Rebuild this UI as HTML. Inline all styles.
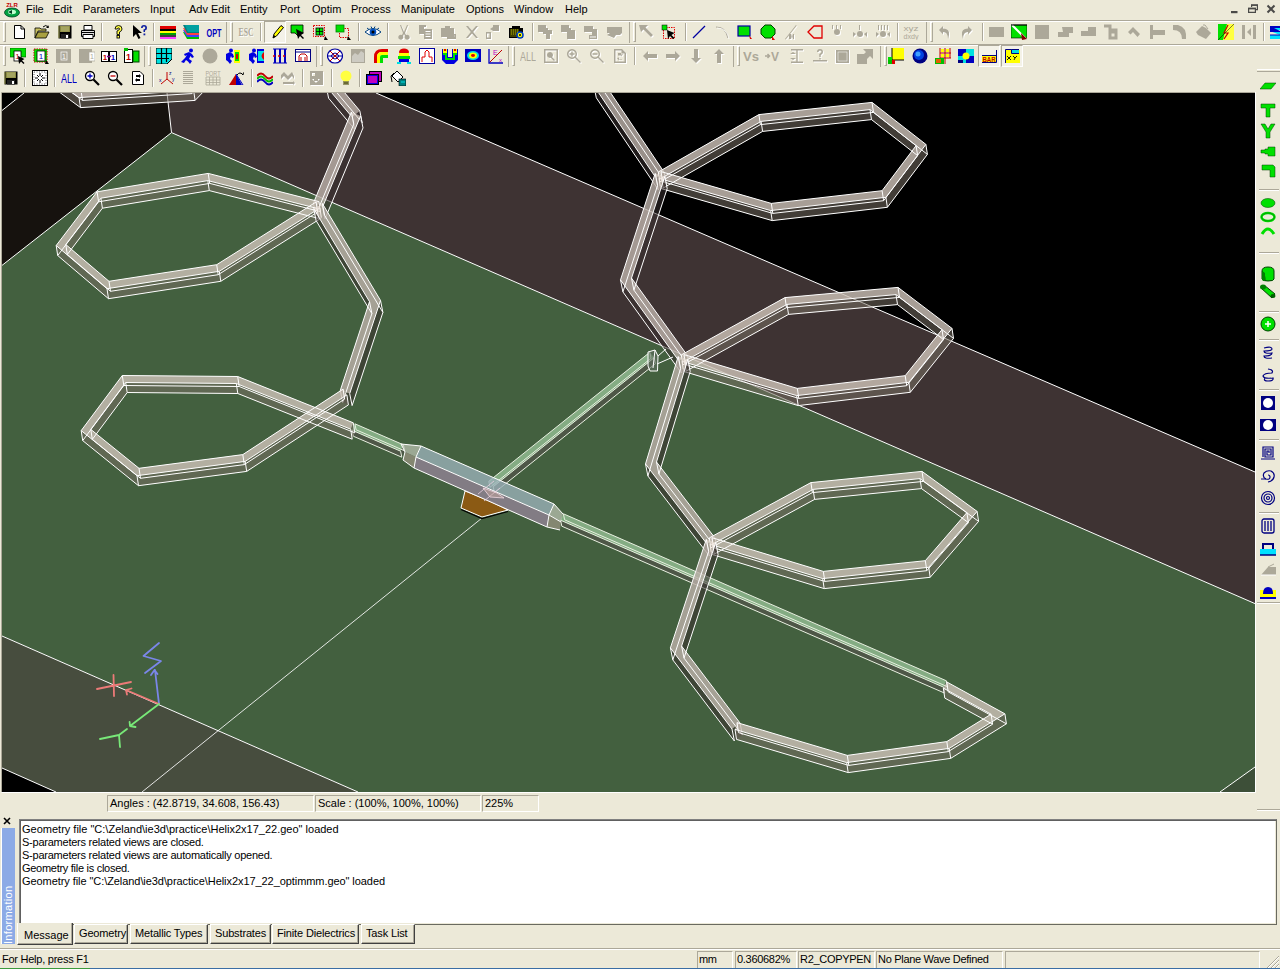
<!DOCTYPE html><html><head><meta charset="utf-8"><style>
*{margin:0;padding:0;box-sizing:border-box}
html,body{width:1280px;height:969px;overflow:hidden;background:#ece9d8;font-family:"Liberation Sans",sans-serif;font-size:11px;color:#000}
.a{position:absolute}
.menu span{position:absolute;top:3px;font-size:11px}
</style></head><body>
<div class="a menu" style="left:0;top:0;width:1280px;height:20px">
<span style="left:26px">File</span>
<span style="left:53px">Edit</span>
<span style="left:83px">Parameters</span>
<span style="left:150px">Input</span>
<span style="left:189px">Adv Edit</span>
<span style="left:240px">Entity</span>
<span style="left:280px">Port</span>
<span style="left:312px">Optim</span>
<span style="left:351px">Process</span>
<span style="left:401px">Manipulate</span>
<span style="left:466px">Options</span>
<span style="left:514px">Window</span>
<span style="left:565px">Help</span>
</div>
<div class="a" style="left:0;top:20px;width:1280px;height:1px;background:#aca899"></div>
<div class="a" style="left:0;top:21px;width:1280px;height:1px;background:#fff"></div>
<div class="a" style="left:0;top:44px;width:1280px;height:1px;background:#aca899"></div>
<div class="a" style="left:0;top:45px;width:1280px;height:1px;background:#fff"></div>
<div class="a" style="left:3px;top:22px;width:3px;height:20px;border-left:1px solid #fff;border-top:1px solid #fff;border-right:1px solid #aca899;border-bottom:1px solid #aca899"></div>
<svg class="a" style="left:11px;top:24px" width="16" height="16" viewBox="0 0 16 16"><path d="M3.5,1.5H10L13.5,5V14.5H3.5Z" fill="#fff" stroke="#000"/><path d="M10,1.5V5H13.5" fill="none" stroke="#000"/></svg>
<svg class="a" style="left:34px;top:24px" width="16" height="16" viewBox="0 0 16 16"><path d="M1,4H6L7,5H12V7H4L1,14Z" fill="#c8c060" stroke="#000" stroke-width="0.8"/><path d="M4,8H15L12,14H1Z" fill="#a8a040" stroke="#000" stroke-width="0.8"/><path d="M9,3Q12,0 14,3" fill="none" stroke="#000"/><path d="M12.5,3.5L14.5,3.5L14,1.5" fill="none" stroke="#000"/></svg>
<svg class="a" style="left:57px;top:24px" width="16" height="16" viewBox="0 0 16 16"><path d="M1.5,1.5H14.5V14.5H1.5Z" fill="#000"/><path d="M3,2H13V8H3Z" fill="#8a8a40"/><path d="M4,2.5H12V7.5H4Z" fill="#a4a460"/><path d="M4,10H12V14.5H4Z" fill="#222"/><rect x="9" y="11" width="2" height="3" fill="#fff"/><path d="M2,2V14" stroke="#a0a050"/></svg>
<svg class="a" style="left:80px;top:24px" width="16" height="16" viewBox="0 0 16 16"><path d="M4,1.5H12V6H4Z" fill="#fff" stroke="#000"/><path d="M1.5,6.5H14.5V12.5H1.5Z" fill="#e0e0e0" stroke="#000"/><path d="M3,10.5H13V14.5H3Z" fill="#fff" stroke="#000"/><path d="M2,8.5H14" stroke="#000"/></svg>
<div class="a" style="left:101px;top:23px;width:2px;height:18px;border-left:1px solid #aca899;border-right:1px solid #fff"></div>
<svg class="a" style="left:110px;top:24px" width="16" height="16" viewBox="0 0 16 16"><path d="M5,5Q5,1.5 8.5,1.5Q12,1.5 12,5Q12,7 9.5,8V10.5H7V7Q9.5,6 9.5,5Q9.5,4 8.5,4Q7.5,4 7.5,5Z" fill="#ffff40" stroke="#000" stroke-width="0.9"/><rect x="7" y="11.5" width="2.5" height="2.5" fill="#ffff40" stroke="#000" stroke-width="0.9"/></svg>
<svg class="a" style="left:132px;top:24px" width="16" height="16" viewBox="0 0 16 16"><path d="M1,1V13L4,10L6.5,15L8.5,14L6,9H10Z" fill="#000"/><path d="M9,4Q9,1 12,1Q15,1 15,4Q15,6 13,6.5V8H11.5V5.5Q13.3,5 13.3,4Q13.3,2.6 12,2.6Q10.7,2.6 10.7,4Z" fill="#1020a0"/><rect x="11.5" y="9.5" width="1.8" height="1.8" fill="#1020a0"/></svg>
<div class="a" style="left:153px;top:23px;width:2px;height:18px;border-left:1px solid #aca899;border-right:1px solid #fff"></div>
<svg class="a" style="left:160px;top:24px" width="16" height="16" viewBox="0 0 16 16"><rect x="0" y="2" width="16" height="3" fill="#e00000"/><rect x="0" y="5" width="16" height="2" fill="#000"/><rect x="0" y="7" width="16" height="2" fill="#ffff00"/><rect x="0" y="9" width="16" height="2" fill="#00a000"/><rect x="0" y="11" width="16" height="2" fill="#404040"/><rect x="0" y="13" width="16" height="2" fill="#ff40ff"/></svg>
<svg class="a" style="left:183px;top:24px" width="16" height="16" viewBox="0 0 16 16"><path d="M0,8L4,15H16V10Z" fill="#00c000"/><path d="M0,6L4,13H16V8Z" fill="#4040ff"/><path d="M0,4L4,11H16V6Z" fill="#ff4040"/><path d="M0,1L4,9H16V1Z" fill="#008080"/><path d="M2,1H16V8H5Z" fill="#00a0a0"/></svg>
<svg class="a" style="left:206px;top:24px" width="16" height="16" viewBox="0 0 16 16"><text x="8" y="12.5" font-family="Liberation Sans" font-weight="bold" font-size="11" fill="#0000c0" text-anchor="middle" textLength="15" lengthAdjust="spacingAndGlyphs">OPT</text></svg>
<div class="a" style="left:226px;top:22px;width:1px;height:21px;background:#aca899"></div>
<div class="a" style="left:230px;top:22px;width:3px;height:20px;border-left:1px solid #fff;border-top:1px solid #fff;border-right:1px solid #aca899;border-bottom:1px solid #aca899"></div>
<svg class="a" style="left:238px;top:24px" width="16" height="16" viewBox="0 0 16 16"><text x="9" y="13" font-family="Liberation Serif" font-weight="bold" font-size="12" fill="#fff" text-anchor="middle" textLength="15" lengthAdjust="spacingAndGlyphs">ESC</text><text x="8" y="12" font-family="Liberation Serif" font-weight="bold" font-size="12" fill="#aca899" text-anchor="middle" textLength="15" lengthAdjust="spacingAndGlyphs">ESC</text></svg>
<div class="a" style="left:260px;top:23px;width:2px;height:18px;border-left:1px solid #aca899;border-right:1px solid #fff"></div>
<div class="a" style="left:264px;top:21px;width:22px;height:22px;background:#f4f2e8;border-left:1px solid #aca899;border-top:1px solid #aca899;border-right:1px solid #fff;border-bottom:1px solid #fff"></div>
<svg class="a" style="left:269px;top:24px" width="16" height="16" viewBox="0 0 16 16"><path d="M4,14L5,10L12,1.5L14.5,3.5L7.5,12Z" fill="#ffff00" stroke="#000"/><path d="M4,14L5,11L6.5,12.5Z" fill="#000"/></svg>
<svg class="a" style="left:290px;top:24px" width="16" height="16" viewBox="0 0 16 16"><path d="M1,1H13V9H8V12L5,9H1Z" fill="#00e000" stroke="#000" stroke-width="0.8"/><path d="M6,5L8,15L10,12L13,15L14,14L11,11L14,9Z" fill="#000"/></svg>
<svg class="a" style="left:312px;top:24px" width="16" height="16" viewBox="0 0 16 16"><rect x="1.5" y="1.5" width="11" height="11" fill="none" stroke="#e00000" stroke-dasharray="1.5,1"/><rect x="4" y="4" width="7" height="7" fill="#00e000" stroke="#000" stroke-width="0.8"/><path d="M4,7.5H11M7.5,4V11" stroke="#000" stroke-width="0.8"/><path d="M13,12L16,16H12Z" fill="#000"/></svg>
<svg class="a" style="left:335px;top:24px" width="16" height="16" viewBox="0 0 16 16"><rect x="4.5" y="4.5" width="9" height="9" fill="none" stroke="#e00000" stroke-dasharray="1.5,1"/><rect x="1" y="1" width="8" height="7" fill="#00e000" stroke="#008000" stroke-width="0.8"/><path d="M13,12L16,16H12Z" fill="#000"/></svg>
<div class="a" style="left:358px;top:23px;width:2px;height:18px;border-left:1px solid #aca899;border-right:1px solid #fff"></div>
<svg class="a" style="left:365px;top:24px" width="16" height="16" viewBox="0 0 16 16"><path d="M0,8Q8,1 16,8Q8,15 0,8Z" fill="#fff" stroke="#004080"/><circle cx="8" cy="8" r="3.3" fill="#0050c0"/><circle cx="8" cy="8" r="1.5" fill="#000"/><path d="M2,4L4,5.5M6,2.5L7,4.5M10,2.5L9,4.5M14,4L12,5.5" stroke="#004080"/></svg>
<div class="a" style="left:387px;top:23px;width:2px;height:18px;border-left:1px solid #aca899;border-right:1px solid #fff"></div>
<svg class="a" style="left:396px;top:24px" width="16" height="16" viewBox="0 0 16 16"><g transform="translate(1,1)" fill="#ffffff"><path d="M5,1L8,8L11,1L12,1L9,9L10,11A2.5,2.5 0 1 1 9,12L8,10L7,12A2.5,2.5 0 1 1 6,11L7,9L4,1Z"/></g><g fill="#aca899"><path d="M5,1L8,8L11,1L12,1L9,9L10,11A2.5,2.5 0 1 1 9,12L8,10L7,12A2.5,2.5 0 1 1 6,11L7,9L4,1Z"/></g></svg>
<svg class="a" style="left:418px;top:24px" width="16" height="16" viewBox="0 0 16 16"><g transform="translate(1,1)" fill="#ffffff"><path d="M1,1H8V3H6V10H1ZM6,5H14V15H6ZM7.5,7V8H12.5V7ZM7.5,9.5V10.5H12.5V9.5ZM7.5,12V13H12.5V12Z"/></g><g fill="#aca899"><path d="M1,1H8V3H6V10H1ZM6,5H14V15H6ZM7.5,7V8H12.5V7ZM7.5,9.5V10.5H12.5V9.5ZM7.5,12V13H12.5V12Z"/></g></svg>
<svg class="a" style="left:440px;top:24px" width="16" height="16" viewBox="0 0 16 16"><g transform="translate(1,1)" fill="#ffffff"><path d="M1,4H5V2H10V4H14V10H16V15H7V10H14V13H1ZM8,11.5V12.5H14.5V11.5Z"/></g><g fill="#aca899"><path d="M1,4H5V2H10V4H14V10H16V15H7V10H14V13H1ZM8,11.5V12.5H14.5V11.5Z"/></g></svg>
<svg class="a" style="left:464px;top:24px" width="16" height="16" viewBox="0 0 16 16"><g transform="translate(1,1)" fill="#ffffff"><path d="M2,2L4,2L8,6.5L12,2L14,2L9.2,8L14,14L12,14L8,9.5L4,14L2,14L6.8,8Z"/></g><g fill="#aca899"><path d="M2,2L4,2L8,6.5L12,2L14,2L9.2,8L14,14L12,14L8,9.5L4,14L2,14L6.8,8Z"/></g></svg>
<svg class="a" style="left:485px;top:24px" width="16" height="16" viewBox="0 0 16 16"><g transform="translate(1,1)" fill="#ffffff"><path d="M8,1H14V7H8ZM1,8H6V15H1ZM2,9.5V13.5H4.5V9.5ZM5,5L8,3V7Z"/></g><g fill="#aca899"><path d="M8,1H14V7H8ZM1,8H6V15H1ZM2,9.5V13.5H4.5V9.5ZM5,5L8,3V7Z"/></g></svg>
<svg class="a" style="left:508px;top:24px" width="16" height="16" viewBox="0 0 16 16"><path d="M1,4H15V14H1Z" fill="#000"/><path d="M4,2H12V4H4Z" fill="#000"/><rect x="2" y="5" width="9" height="8" fill="#808000" fill-opacity="0.5"/><circle cx="12" cy="11" r="3.8" fill="#0040c0"/><circle cx="12" cy="11" r="2.2" fill="#ffff00"/><circle cx="12" cy="11" r="1" fill="#000"/><path d="M3,6H10M3,8H10M3,10H8" stroke="#ffff00" stroke-width="0.6" stroke-dasharray="1,1"/></svg>
<div class="a" style="left:532px;top:23px;width:2px;height:18px;border-left:1px solid #aca899;border-right:1px solid #fff"></div>
<svg class="a" style="left:537px;top:24px" width="16" height="16" viewBox="0 0 16 16"><g transform="translate(1,1)" fill="#ffffff"><path d="M1,1H9V4H11V6H15V10H6V8H1ZM9,10H13V15H9Z"/></g><g fill="#aca899"><path d="M1,1H9V4H11V6H15V10H6V8H1ZM9,10H13V15H9Z"/></g></svg>
<svg class="a" style="left:560px;top:24px" width="16" height="16" viewBox="0 0 16 16"><g transform="translate(1,1)" fill="#ffffff"><path d="M1,1H9V4H11V6H15V10H7V8H1ZM7,10H15V15H7Z"/></g><g fill="#aca899"><path d="M1,1H9V4H11V6H15V10H7V8H1ZM7,10H15V15H7Z"/></g></svg>
<svg class="a" style="left:583px;top:24px" width="16" height="16" viewBox="0 0 16 16"><g transform="translate(1,1)" fill="#ffffff"><path d="M1,2H10V5H14V11H9V8H1ZM6,11H14V15H6ZM7,12.5V13.5H13V12.5Z"/></g><g fill="#aca899"><path d="M1,2H10V5H14V11H9V8H1ZM6,11H14V15H6ZM7,12.5V13.5H13V12.5Z"/></g></svg>
<svg class="a" style="left:606px;top:24px" width="16" height="16" viewBox="0 0 16 16"><g transform="translate(1,1)" fill="#ffffff"><path d="M1,3H16V9L14,11H10L8,14L1,11L4,9H1Z"/></g><g fill="#aca899"><path d="M1,3H16V9L14,11H10L8,14L1,11L4,9H1Z"/></g></svg>
<div class="a" style="left:629px;top:22px;width:1px;height:21px;background:#aca899"></div>
<div class="a" style="left:633px;top:22px;width:3px;height:20px;border-left:1px solid #fff;border-top:1px solid #fff;border-right:1px solid #aca899;border-bottom:1px solid #aca899"></div>
<svg class="a" style="left:638px;top:24px" width="16" height="16" viewBox="0 0 16 16"><g transform="translate(1,1)" fill="#ffffff"><path d="M1,1H10L7.5,3.5L15,11L13,13L5.5,5.5L3,8Z"/></g><g fill="#aca899"><path d="M1,1H10L7.5,3.5L15,11L13,13L5.5,5.5L3,8Z"/></g></svg>
<svg class="a" style="left:661px;top:24px" width="16" height="16" viewBox="0 0 16 16"><rect x="2.5" y="3.5" width="11" height="11" fill="none" stroke="#e00000" stroke-dasharray="1.5,1"/><rect x="1" y="1" width="5" height="5" fill="#00e000" stroke="#000" stroke-width="0.5"/><path d="M6,6L7,15L9,12L12,15L13.5,14L10.5,11L13.5,9Z" fill="#000"/></svg>
<div class="a" style="left:685px;top:23px;width:2px;height:18px;border-left:1px solid #aca899;border-right:1px solid #fff"></div>
<svg class="a" style="left:691px;top:24px" width="16" height="16" viewBox="0 0 16 16"><path d="M2,14L14,2" stroke="#0000a0" stroke-width="1.2"/></svg>
<svg class="a" style="left:714px;top:24px" width="16" height="16" viewBox="0 0 16 16"><path d="M2,3Q12,3 14,14" fill="none" stroke="#aca899" stroke-width="1.2"/><path d="M3,4Q13,4 15,15" fill="none" stroke="#fff" stroke-width="0.8"/></svg>
<svg class="a" style="left:737px;top:24px" width="16" height="16" viewBox="0 0 16 16"><rect x="1" y="2" width="12" height="10" fill="#00e000" stroke="#0000a0" stroke-width="1.2"/><path d="M12,11L15,15H13Z" fill="#e00000"/></svg>
<svg class="a" style="left:760px;top:24px" width="16" height="16" viewBox="0 0 16 16"><path d="M5,1H11L15,5V10L11,14H5L1,10V5Z" fill="#00e000" stroke="#004000"/><path d="M12,12L15,16H12Z" fill="#e00000"/></svg>
<svg class="a" style="left:784px;top:24px" width="16" height="16" viewBox="0 0 16 16"><g transform="translate(1,1)" fill="#ffffff"><path d="M1,15L12,1L12.6,1.6L1.6,15.6ZM5,10H6V15H5ZM7,10L8,13L9,10H10V15H9V12L8,15L7,12V15H6V10Z"/></g><g fill="#aca899"><path d="M1,15L12,1L12.6,1.6L1.6,15.6ZM5,10H6V15H5ZM7,10L8,13L9,10H10V15H9V12L8,15L7,12V15H6V10Z"/></g></svg>
<svg class="a" style="left:807px;top:24px" width="16" height="16" viewBox="0 0 16 16"><path d="M1,8L7,2H15V14H7Z" fill="none" stroke="#e00000" stroke-width="1.3"/></svg>
<svg class="a" style="left:829px;top:24px" width="16" height="16" viewBox="0 0 16 16"><g transform="translate(1,1)" fill="#ffffff"><path d="M3,1H4V5H3ZM7,1H8V5H7ZM11,1H12V5H11ZM5,8A3,3 0 1 1 11,8A3,3 0 1 1 5,8Z"/></g><g fill="#aca899"><path d="M3,1H4V5H3ZM7,1H8V5H7ZM11,1H12V5H11ZM5,8A3,3 0 1 1 11,8A3,3 0 1 1 5,8Z"/></g></svg>
<svg class="a" style="left:852px;top:24px" width="16" height="16" viewBox="0 0 16 16"><g transform="translate(1,1)" fill="#ffffff"><path d="M7,1H8V6H7ZM1,8L4,10L1,13ZM15,8L12,10L15,13ZM5,10A3,3 0 1 1 11,10A3,3 0 1 1 5,10Z"/></g><g fill="#aca899"><path d="M7,1H8V6H7ZM1,8L4,10L1,13ZM15,8L12,10L15,13ZM5,10A3,3 0 1 1 11,10A3,3 0 1 1 5,10Z"/></g></svg>
<svg class="a" style="left:875px;top:24px" width="16" height="16" viewBox="0 0 16 16"><g transform="translate(1,1)" fill="#ffffff"><path d="M3,1H4V6H3ZM6,1H7V6H6ZM9,1H10V6H9ZM12,1H13V6H12ZM1,8L4,10L1,13ZM15,8L12,10L15,13ZM5,10A3,3 0 1 1 11,10A3,3 0 1 1 5,10Z"/></g><g fill="#aca899"><path d="M3,1H4V6H3ZM6,1H7V6H6ZM9,1H10V6H9ZM12,1H13V6H12ZM1,8L4,10L1,13ZM15,8L12,10L15,13ZM5,10A3,3 0 1 1 11,10A3,3 0 1 1 5,10Z"/></g></svg>
<div class="a" style="left:897px;top:23px;width:2px;height:18px;border-left:1px solid #aca899;border-right:1px solid #fff"></div>
<svg class="a" style="left:903px;top:24px" width="16" height="16" viewBox="0 0 16 16"><text x="8" y="7" font-family="Liberation Sans" font-size="7.5" fill="#aca899" text-anchor="middle" textLength="15" lengthAdjust="spacingAndGlyphs">xyz</text><text x="8" y="15" font-family="Liberation Sans" font-size="7.5" fill="#aca899" text-anchor="middle" textLength="15" lengthAdjust="spacingAndGlyphs">dxdy</text></svg>
<div class="a" style="left:926px;top:22px;width:1px;height:21px;background:#aca899"></div>
<div class="a" style="left:930px;top:22px;width:3px;height:20px;border-left:1px solid #fff;border-top:1px solid #fff;border-right:1px solid #aca899;border-bottom:1px solid #aca899"></div>
<svg class="a" style="left:936px;top:24px" width="16" height="16" viewBox="0 0 16 16"><g transform="translate(1,1)" fill="#ffffff"><path d="M3,6L7,2V4.5Q14,4.5 13,11L12,15Q12,8 7,8V10.5Z"/></g><g fill="#aca899"><path d="M3,6L7,2V4.5Q14,4.5 13,11L12,15Q12,8 7,8V10.5Z"/></g></svg>
<svg class="a" style="left:959px;top:24px" width="16" height="16" viewBox="0 0 16 16"><g transform="translate(1,1)" fill="#ffffff"><path d="M13,6L9,2V4.5Q2,4.5 3,11L4,15Q4,8 9,8V10.5Z"/></g><g fill="#aca899"><path d="M13,6L9,2V4.5Q2,4.5 3,11L4,15Q4,8 9,8V10.5Z"/></g></svg>
<div class="a" style="left:982px;top:23px;width:2px;height:18px;border-left:1px solid #aca899;border-right:1px solid #fff"></div>
<svg class="a" style="left:988px;top:24px" width="16" height="16" viewBox="0 0 16 16"><rect x="1" y="3" width="15" height="10" fill="#aca899"/></svg>
<svg class="a" style="left:1011px;top:24px" width="16" height="16" viewBox="0 0 16 16"><rect x="0" y="1" width="16" height="13" fill="#00e000" stroke="#000" stroke-width="0.6"/><path d="M1,1L15,15" stroke="#fff" stroke-width="2"/><path d="M10,9L16,15L11,16Z" fill="#800000"/><path d="M0,1H16" stroke="#000"/></svg>
<svg class="a" style="left:1034px;top:24px" width="16" height="16" viewBox="0 0 16 16"><rect x="1" y="1" width="14" height="14" fill="#aca899"/></svg>
<svg class="a" style="left:1057px;top:24px" width="16" height="16" viewBox="0 0 16 16"><path d="M5,3H16V9H12V13H1V8H6Z" fill="#aca899"/></svg>
<svg class="a" style="left:1080px;top:24px" width="16" height="16" viewBox="0 0 16 16"><path d="M8,3H16V12H1V7H8Z" fill="#aca899"/></svg>
<svg class="a" style="left:1103px;top:24px" width="16" height="16" viewBox="0 0 16 16"><path d="M1,2H7V8H10V6H13V14H7V8" fill="none" stroke="#aca899" stroke-width="3"/></svg>
<svg class="a" style="left:1126px;top:24px" width="16" height="16" viewBox="0 0 16 16"><path d="M2,8L7,3L14,10L11.5,13L7,8L4.5,10.5Z" fill="#aca899"/></svg>
<svg class="a" style="left:1149px;top:24px" width="16" height="16" viewBox="0 0 16 16"><path d="M1,1H4V6H16V11H4V15H1Z" fill="#aca899"/></svg>
<svg class="a" style="left:1172px;top:24px" width="16" height="16" viewBox="0 0 16 16"><path d="M1,1H6Q15,3 14,15H10Q10,6 1,6Z" fill="#aca899"/></svg>
<svg class="a" style="left:1195px;top:24px" width="16" height="16" viewBox="0 0 16 16"><path d="M1,8L7,2L11,4L16,9L11,15L3,11Z" fill="#aca899"/><path d="M8,1L10,1L13,5" stroke="#aca899" fill="none"/></svg>
<svg class="a" style="left:1218px;top:24px" width="16" height="16" viewBox="0 0 16 16"><path d="M0,0H16V16H0Z" fill="#00e000"/><path d="M9,0H16V16H5Z" fill="#ffff40"/><path d="M10,1L6,9L10,9L6,15" fill="none" stroke="#c00000" stroke-width="1.2"/><path d="M0,16L16,0" stroke="#000" stroke-width="0.5"/></svg>
<svg class="a" style="left:1241px;top:24px" width="16" height="16" viewBox="0 0 16 16"><path d="M1,1H4V15H1ZM12,1H15V15H12ZM6,8L10,4V12Z" fill="#aca899"/></svg>
<div class="a" style="left:1263px;top:23px;width:2px;height:18px;border-left:1px solid #aca899;border-right:1px solid #fff"></div>
<svg class="a" style="left:1270px;top:24px" width="16" height="16" viewBox="0 0 16 16"><path d="M0,2H16V6H6L16,10V15H0V11H10L0,7Z" fill="#00e0ff"/><path d="M0,2H16V4H4L12,8L0,8Z" fill="#0000c0"/><path d="M0,11H16" stroke="#0000c0"/></svg>
<div class="a" style="left:3px;top:46px;width:3px;height:20px;border-left:1px solid #fff;border-top:1px solid #fff;border-right:1px solid #aca899;border-bottom:1px solid #aca899"></div>
<svg class="a" style="left:10px;top:48px" width="16" height="16" viewBox="0 0 16 16"><rect x="0" y="0" width="16" height="9" fill="#00e000" stroke="#004000" stroke-width="0.6"/><rect x="4" y="3" width="7" height="10" fill="#fff" stroke="#000" stroke-width="0.8"/><text x="7.5" y="11" font-size="8" font-family="Liberation Sans" fill="#c00000" text-anchor="middle">1</text><path d="M8,8L9,16L11,13.5L13.5,16L14.5,15L12,12.5L14.5,11Z" fill="#000"/></svg>
<svg class="a" style="left:33px;top:48px" width="16" height="16" viewBox="0 0 16 16"><rect x="1" y="1" width="13" height="13" fill="#00e000" stroke="#c00000" stroke-dasharray="1.5,1"/><rect x="4" y="3" width="8" height="10" fill="#fff" stroke="#000" stroke-width="0.8"/><text x="8" y="11" font-size="8" font-family="Liberation Sans" fill="#0000c0" text-anchor="middle">1</text><path d="M13,12L16,16H12Z" fill="#000"/></svg>
<svg class="a" style="left:56px;top:48px" width="16" height="16" viewBox="0 0 16 16"><rect x="0" y="1" width="15" height="14" fill="#aca899"/><rect x="5" y="4" width="6" height="8" fill="none" stroke="#fff" stroke-width="0.7"/><text x="8" y="11" font-size="7" font-family="Liberation Sans" fill="#fff" text-anchor="middle">1</text></svg>
<svg class="a" style="left:79px;top:48px" width="16" height="16" viewBox="0 0 16 16"><rect x="0" y="1" width="13" height="14" fill="#aca899"/><rect x="10" y="4" width="6" height="9" fill="#fff" stroke="#aca899" stroke-width="0.7"/><text x="13" y="11" font-size="7" font-family="Liberation Sans" fill="#aca899" text-anchor="middle">1</text></svg>
<svg class="a" style="left:101px;top:48px" width="16" height="16" viewBox="0 0 16 16"><rect x="0.5" y="3.5" width="7" height="10" fill="#fff" stroke="#000"/><rect x="8.5" y="3.5" width="7" height="10" fill="#fff" stroke="#000"/><text x="4" y="11.5" font-size="8" font-weight="bold" font-family="Liberation Sans" fill="#c00000" text-anchor="middle">1</text><text x="12" y="11.5" font-size="8" font-weight="bold" font-family="Liberation Sans" fill="#0000c0" text-anchor="middle">1</text><path d="M6,8.5H10" stroke="#800080" stroke-width="1.5"/></svg>
<svg class="a" style="left:124px;top:48px" width="16" height="16" viewBox="0 0 16 16"><rect x="0.5" y="1.5" width="8" height="13" fill="#fff" stroke="#000"/><rect x="9" y="3" width="6" height="11" fill="#00e000" stroke="#004000"/><text x="4.5" y="11.5" font-size="9" font-weight="bold" font-family="Liberation Sans" fill="#c00000" text-anchor="middle">1</text><rect x="0" y="0" width="4" height="3" fill="#00c000"/></svg>
<div class="a" style="left:144px;top:46px;width:1px;height:21px;background:#aca899"></div>
<div class="a" style="left:148px;top:46px;width:3px;height:20px;border-left:1px solid #fff;border-top:1px solid #fff;border-right:1px solid #aca899;border-bottom:1px solid #aca899"></div>
<svg class="a" style="left:156px;top:48px" width="16" height="16" viewBox="0 0 16 16"><path d="M0,0H16V11L11,16H0Z" fill="#00e0e0" stroke="#000" stroke-width="1"/><path d="M0,5.5H16M0,10.5H13M5.5,0V16M10.5,0V14" stroke="#000" stroke-width="1.2"/></svg>
<svg class="a" style="left:180px;top:48px" width="16" height="16" viewBox="0 0 16 16"><circle cx="11" cy="2.5" r="2" fill="#0000e0"/><path d="M4,6L9,4L12,6L14,9L12,10L10.5,8L9,11L12,13L10,16L8,13.5L6,12L4,15L1,14L5,10L7,7L5,8Z" fill="#0000e0"/></svg>
<svg class="a" style="left:202px;top:48px" width="16" height="16" viewBox="0 0 16 16"><circle cx="8" cy="8" r="7.5" fill="#aca899"/></svg>
<svg class="a" style="left:225px;top:48px" width="16" height="16" viewBox="0 0 16 16"><circle cx="6" cy="2.5" r="2" fill="#0000e0"/><path d="M1,6L5,4L8,6L9,9L7,10L6,8L5,11L7,13L5,16L3,13.5L1,12Z" fill="#0000e0"/><rect x="9" y="2" width="6" height="13" fill="#ffff00"/><rect x="10" y="4" width="4" height="9" fill="#00e000"/><rect x="11" y="6" width="2" height="5" fill="#e00000"/></svg>
<svg class="a" style="left:248px;top:48px" width="16" height="16" viewBox="0 0 16 16"><circle cx="6" cy="2.5" r="2" fill="#0000e0"/><path d="M1,6L5,4L8,6L9,9L7,10L6,8L5,11L7,13L5,16L3,13.5L1,12Z" fill="#0000e0"/><rect x="9" y="1" width="7" height="14" fill="#0000e0"/><rect x="10" y="3" width="6" height="10" fill="#00e0e0"/><path d="M16,4Q11,8 16,12Z" fill="#e00000"/></svg>
<svg class="a" style="left:272px;top:48px" width="16" height="16" viewBox="0 0 16 16"><path d="M3,1V15M8,1V15M13,1V15" stroke="#0000c0" stroke-width="2"/><path d="M1,1H15M1,15H15" stroke="#0000c0" stroke-width="1"/><path d="M1,8H15" stroke="#e00000" stroke-width="1.5" stroke-dasharray="2,3"/></svg>
<svg class="a" style="left:295px;top:48px" width="16" height="16" viewBox="0 0 16 16"><rect x="0.5" y="1.5" width="15" height="12" fill="#fff" stroke="#000080"/><path d="M0.5,4H15.5" stroke="#000080"/><path d="M4,13V8L6,6H10L12,8V13M6,9V13M10,9V13" fill="none" stroke="#c00000"/></svg>
<div class="a" style="left:316px;top:46px;width:1px;height:21px;background:#aca899"></div>
<div class="a" style="left:320px;top:46px;width:3px;height:20px;border-left:1px solid #fff;border-top:1px solid #fff;border-right:1px solid #aca899;border-bottom:1px solid #aca899"></div>
<svg class="a" style="left:327px;top:48px" width="16" height="16" viewBox="0 0 16 16"><ellipse cx="8" cy="8" rx="7.5" ry="7" fill="#fff" stroke="#0000a0" stroke-width="1.2"/><path d="M1,8H15" stroke="#0000a0"/><path d="M8,8L3,3M8,8L13,3M8,8L3,13M8,8L13,13" stroke="#c00000"/><path d="M4,8Q8,2 12,8Q8,14 4,8Z" fill="none" stroke="#0000a0"/></svg>
<svg class="a" style="left:350px;top:48px" width="16" height="16" viewBox="0 0 16 16"><path d="M1,1H15V15H1Z" fill="#aca899"/><path d="M2,8L5,5L8,7L11,3L14,5V14H2Z" fill="#fff" fill-opacity="0.4"/></svg>
<svg class="a" style="left:373px;top:48px" width="16" height="16" viewBox="0 0 16 16"><path d="M1,15V9Q1,1 9,1H15V4H9Q4,4 4,9V15Z" fill="#e00000"/><path d="M4,15V9Q4,4 9,4H15V7H9Q7,7 7,9V15Z" fill="#ffff00"/><path d="M7,15V9Q7,7 9,7H15V10H10V15Z" fill="#00e000"/></svg>
<svg class="a" style="left:396px;top:48px" width="16" height="16" viewBox="0 0 16 16"><ellipse cx="8" cy="4" rx="5" ry="3.5" fill="#e00000"/><path d="M3,5H13V8H3Z" fill="#ffff00"/><path d="M2,8H14V11H2Z" fill="#00e000"/><path d="M3,11H13V14H3Z" fill="#0000e0"/><path d="M1,14H5V16H1ZM11,14H15V16H11Z" fill="#00e0e0"/></svg>
<svg class="a" style="left:419px;top:48px" width="16" height="16" viewBox="0 0 16 16"><rect x="0.5" y="0.5" width="15" height="15" fill="#fff" stroke="#0000a0"/><path d="M3,14V9L6,9V4L8,2L10,4V9H13V14" fill="none" stroke="#e00000"/></svg>
<svg class="a" style="left:442px;top:48px" width="16" height="16" viewBox="0 0 16 16"><path d="M0,1H6V9H10V1H16V12L12,16H4L0,12Z" fill="#0000e0"/><path d="M1,1H5V10H11V1H15V7H13V12H3V7H1Z" fill="#00e000"/><path d="M1,1H5V5H1ZM11,1H15V5H11Z" fill="#ffff00"/><path d="M2,1H4V3H2ZM12,1H14V3H12Z" fill="#e00000"/></svg>
<svg class="a" style="left:465px;top:48px" width="16" height="16" viewBox="0 0 16 16"><rect x="0" y="1" width="16" height="13" fill="#0000c0"/><ellipse cx="8" cy="7.5" rx="6" ry="4.5" fill="#00e0e0"/><ellipse cx="8" cy="7.5" rx="4" ry="3" fill="#ffff00"/><ellipse cx="8" cy="7.5" rx="2" ry="1.4" fill="#e00000"/></svg>
<svg class="a" style="left:488px;top:48px" width="16" height="16" viewBox="0 0 16 16"><path d="M1,1V15H15" fill="none" stroke="#0000c0" stroke-width="1.3"/><path d="M2,14L14,2" stroke="#c00000"/><text x="5" y="7" font-size="7" font-family="Liberation Sans" fill="#c000c0">E</text><text x="11" y="14" font-size="6" font-family="Liberation Sans" fill="#c000c0">x</text></svg>
<div class="a" style="left:508px;top:46px;width:1px;height:21px;background:#aca899"></div>
<div class="a" style="left:512px;top:46px;width:3px;height:20px;border-left:1px solid #fff;border-top:1px solid #fff;border-right:1px solid #aca899;border-bottom:1px solid #aca899"></div>
<svg class="a" style="left:520px;top:48px" width="16" height="16" viewBox="0 0 16 16"><text x="8" y="13" font-family="Liberation Sans" font-size="12" fill="#aca899" text-anchor="middle" textLength="16" lengthAdjust="spacingAndGlyphs">ALL</text></svg>
<svg class="a" style="left:543px;top:48px" width="16" height="16" viewBox="0 0 16 16"><g transform="translate(1,1)" fill="#ffffff"><path d="M1,1H15V15H1ZM2.5,2.5V13.5H13.5V2.5ZM7,4A3,3 0 1 0 7.01,4ZM9,9L12,12L11,13L8,10Z"/></g><g fill="#aca899"><path d="M1,1H15V15H1ZM2.5,2.5V13.5H13.5V2.5ZM7,4A3,3 0 1 0 7.01,4ZM9,9L12,12L11,13L8,10Z"/></g></svg>
<svg class="a" style="left:566px;top:48px" width="16" height="16" viewBox="0 0 16 16"><g transform="translate(1,1)" fill="#ffffff"><path d="M6,1A5,5 0 1 1 5.99,1ZM6,2.5A3.5,3.5 0 1 0 6.01,2.5ZM5.3,3.5H6.7V5.3H8.5V6.7H6.7V8.5H5.3V6.7H3.5V5.3H5.3ZM9,10L10,9L15,14L14,15Z"/></g><g fill="#aca899"><path d="M6,1A5,5 0 1 1 5.99,1ZM6,2.5A3.5,3.5 0 1 0 6.01,2.5ZM5.3,3.5H6.7V5.3H8.5V6.7H6.7V8.5H5.3V6.7H3.5V5.3H5.3ZM9,10L10,9L15,14L14,15Z"/></g></svg>
<svg class="a" style="left:589px;top:48px" width="16" height="16" viewBox="0 0 16 16"><g transform="translate(1,1)" fill="#ffffff"><path d="M6,1A5,5 0 1 1 5.99,1ZM6,2.5A3.5,3.5 0 1 0 6.01,2.5ZM3.5,5.3H8.5V6.7H3.5ZM9,10L10,9L15,14L14,15Z"/></g><g fill="#aca899"><path d="M6,1A5,5 0 1 1 5.99,1ZM6,2.5A3.5,3.5 0 1 0 6.01,2.5ZM3.5,5.3H8.5V6.7H3.5ZM9,10L10,9L15,14L14,15Z"/></g></svg>
<svg class="a" style="left:612px;top:48px" width="16" height="16" viewBox="0 0 16 16"><g transform="translate(1,1)" fill="#ffffff"><path d="M2,1H10L14,5V15H2ZM3.5,2.5V13.5H12.5V5.5H9.5V2.5ZM6,5H9V6.5L11,6L9,8.5V7.5H6ZM10,11H7V9.5L5,10L7,12.5V11.5H10Z"/></g><g fill="#aca899"><path d="M2,1H10L14,5V15H2ZM3.5,2.5V13.5H12.5V5.5H9.5V2.5ZM6,5H9V6.5L11,6L9,8.5V7.5H6ZM10,11H7V9.5L5,10L7,12.5V11.5H10Z"/></g></svg>
<div class="a" style="left:634px;top:47px;width:2px;height:18px;border-left:1px solid #aca899;border-right:1px solid #fff"></div>
<svg class="a" style="left:642px;top:48px" width="16" height="16" viewBox="0 0 16 16"><g transform="translate(1,1)" fill="#ffffff"><path d="M1,8L6,3V6H15V10H6V13Z"/></g><g fill="#aca899"><path d="M1,8L6,3V6H15V10H6V13Z"/></g></svg>
<svg class="a" style="left:665px;top:48px" width="16" height="16" viewBox="0 0 16 16"><g transform="translate(1,1)" fill="#ffffff"><path d="M15,8L10,3V6H1V10H10V13Z"/></g><g fill="#aca899"><path d="M15,8L10,3V6H1V10H10V13Z"/></g></svg>
<svg class="a" style="left:688px;top:48px" width="16" height="16" viewBox="0 0 16 16"><g transform="translate(1,1)" fill="#ffffff"><path d="M8,15L3,10H6V1H10V10H13Z"/></g><g fill="#aca899"><path d="M8,15L3,10H6V1H10V10H13Z"/></g></svg>
<svg class="a" style="left:711px;top:48px" width="16" height="16" viewBox="0 0 16 16"><g transform="translate(1,1)" fill="#ffffff"><path d="M8,1L3,6H6V15H10V6H13Z"/></g><g fill="#aca899"><path d="M8,1L3,6H6V15H10V6H13Z"/></g></svg>
<div class="a" style="left:733px;top:46px;width:1px;height:21px;background:#aca899"></div>
<div class="a" style="left:737px;top:46px;width:3px;height:20px;border-left:1px solid #fff;border-top:1px solid #fff;border-right:1px solid #aca899;border-bottom:1px solid #aca899"></div>
<svg class="a" style="left:743px;top:48px" width="16" height="16" viewBox="0 0 16 16"><text x="8" y="13" font-family="Liberation Sans" font-weight="bold" font-size="12" fill="#aca899" text-anchor="middle" textLength="16" lengthAdjust="spacingAndGlyphs">Vs</text></svg>
<svg class="a" style="left:765px;top:48px" width="16" height="16" viewBox="0 0 16 16"><text x="10" y="13" font-family="Liberation Sans" font-weight="bold" font-size="12" fill="#aca899" text-anchor="middle">V</text><path d="M0,8H4M2.5,6L4.5,8L2.5,10" stroke="#aca899" stroke-width="1.5" fill="none"/></svg>
<svg class="a" style="left:789px;top:48px" width="16" height="16" viewBox="0 0 16 16"><g transform="translate(1,1)" fill="#ffffff"><path d="M2,1H14V2.5H8.7V13.5H14V15H2V13.5H7.3V2.5H2ZM4,4L7,6H1ZM4,12L1,10H7Z"/></g><g fill="#aca899"><path d="M2,1H14V2.5H8.7V13.5H14V15H2V13.5H7.3V2.5H2ZM4,4L7,6H1ZM4,12L1,10H7Z"/></g></svg>
<svg class="a" style="left:812px;top:48px" width="16" height="16" viewBox="0 0 16 16"><g transform="translate(1,1)" fill="#ffffff"><path d="M5,4Q5,1 8,1Q11,1 11,4Q11,6 8.7,7V9H7.3V6Q9.5,5 9.5,4Q9.5,2.5 8,2.5Q6.5,2.5 6.5,4ZM1,12H15V13.5H1ZM7.3,10H8.7V11.4H7.3Z"/></g><g fill="#aca899"><path d="M5,4Q5,1 8,1Q11,1 11,4Q11,6 8.7,7V9H7.3V6Q9.5,5 9.5,4Q9.5,2.5 8,2.5Q6.5,2.5 6.5,4ZM1,12H15V13.5H1ZM7.3,10H8.7V11.4H7.3Z"/></g></svg>
<svg class="a" style="left:835px;top:48px" width="16" height="16" viewBox="0 0 16 16"><rect x="0.5" y="2.5" width="14" height="13" fill="none" stroke="#fff"/><rect x="1" y="2" width="13" height="13" fill="#aca899"/><rect x="3" y="4" width="9" height="9" fill="#aca899" stroke="#fff" stroke-width="0.5"/></svg>
<svg class="a" style="left:857px;top:48px" width="16" height="16" viewBox="0 0 16 16"><path d="M0,6H10V16H0Z" fill="#aca899"/><path d="M6,1H16V11L13,8L9,12L5,8L9,4Z" fill="#aca899"/></svg>
<div class="a" style="left:880px;top:46px;width:1px;height:21px;background:#aca899"></div>
<div class="a" style="left:884px;top:46px;width:3px;height:20px;border-left:1px solid #fff;border-top:1px solid #fff;border-right:1px solid #aca899;border-bottom:1px solid #aca899"></div>
<svg class="a" style="left:888px;top:48px" width="16" height="16" viewBox="0 0 16 16"><rect x="4" y="0" width="12" height="12" fill="#ffff00"/><path d="M4,0V16M0,12H16" stroke="#000" stroke-width="1"/><rect x="0" y="12" width="4" height="4" fill="#00c000"/><rect x="0" y="9" width="4" height="3" fill="#00e000"/><rect x="4" y="12" width="3" height="4" fill="#e00000"/></svg>
<svg class="a" style="left:912px;top:48px" width="16" height="16" viewBox="0 0 16 16"><circle cx="8" cy="8" r="7.5" fill="#000080"/><circle cx="7" cy="7" r="5" fill="#0040e0"/><circle cx="6" cy="6" r="2.5" fill="#40a0ff"/></svg>
<svg class="a" style="left:935px;top:48px" width="16" height="16" viewBox="0 0 16 16"><path d="M5,0V16M10,0V16M5,5H16M5,10H16M15,0V10" stroke="#c00000" fill="none"/><rect x="6" y="1" width="3" height="3" fill="#ffff00"/><rect x="11" y="1" width="3" height="3" fill="#ffff00"/><rect x="6" y="6" width="3" height="3" fill="#ffff00"/><rect x="11" y="6" width="3" height="3" fill="#ffff00"/><rect x="0" y="10" width="9" height="6" fill="#00c000"/><rect x="1" y="11" width="5" height="4" fill="#e06000"/></svg>
<svg class="a" style="left:958px;top:48px" width="16" height="16" viewBox="0 0 16 16"><rect x="0" y="1" width="16" height="14" fill="#00e0e0"/><path d="M0,1H8V8H0Z" fill="#0000c0"/><path d="M8,8H16V15H8Z" fill="#0000c0"/><circle cx="8" cy="8" r="3.5" fill="#ffff00"/><path d="M0,15H5V12H0Z" fill="#000080"/></svg>
<div class="a" style="left:978px;top:45px;width:22px;height:22px;background:#f4f2e8;border-left:1px solid #aca899;border-top:1px solid #aca899;border-right:1px solid #fff;border-bottom:1px solid #fff"></div>
<svg class="a" style="left:981px;top:48px" width="16" height="16" viewBox="0 0 16 16"><rect x="1" y="8" width="14" height="6" fill="#ffff00"/><path d="M15.5,2V14.5H1M1,7.5H15" fill="none" stroke="#000080"/><text x="8" y="13.5" font-size="6.5" font-weight="bold" font-family="Liberation Sans" fill="#c00000" text-anchor="middle" textLength="13" lengthAdjust="spacingAndGlyphs">BAR</text></svg>
<div class="a" style="left:1001px;top:45px;width:22px;height:22px;background:#f4f2e8;border-left:1px solid #aca899;border-top:1px solid #aca899;border-right:1px solid #fff;border-bottom:1px solid #fff"></div>
<svg class="a" style="left:1004px;top:48px" width="16" height="16" viewBox="0 0 16 16"><rect x="1" y="2" width="15" height="13" fill="#ffff00"/><rect x="7" y="1" width="8" height="4" fill="#00e0e0"/><path d="M1.5,15V1.5H7.5V5.5H15M7.5,1.5H15" fill="none" stroke="#000080"/><path d="M3,8L7,12M7,8L3,12M9,8L11,10L13,8M11,10L10,12" stroke="#000" stroke-width="0.9" fill="none"/></svg>
<svg class="a" style="left:3px;top:70px" width="16" height="16" viewBox="0 0 16 16"><path d="M1.5,1.5H14.5V14.5H1.5Z" fill="#000"/><path d="M3,2H13V8H3Z" fill="#8a8a40"/><path d="M4,2.5H12V7.5H4Z" fill="#a4a460"/><path d="M4,10H12V14.5H4Z" fill="#222"/><rect x="9" y="11" width="2" height="3" fill="#fff"/><path d="M2,2V14" stroke="#a0a050"/></svg>
<div class="a" style="left:24px;top:69px;width:2px;height:18px;border-left:1px solid #aca899;border-right:1px solid #fff"></div>
<svg class="a" style="left:32px;top:70px" width="16" height="16" viewBox="0 0 16 16"><rect x="0.5" y="0.5" width="15" height="15" fill="#fff" stroke="#000"/><path d="M2,2H14V14H2Z" fill="none" stroke="#000" stroke-width="0.6" stroke-dasharray="1,1.5"/><path d="M5,5L7,7M11,5L9,7M5,11L7,9M11,11L9,9M8,3V6M8,10V13M3,8H6M10,8H13" stroke="#000" stroke-width="1"/></svg>
<div class="a" style="left:54px;top:69px;width:2px;height:18px;border-left:1px solid #aca899;border-right:1px solid #fff"></div>
<svg class="a" style="left:61px;top:70px" width="16" height="16" viewBox="0 0 16 16"><text x="8" y="13" font-family="Liberation Sans" font-size="12" fill="#0000c0" text-anchor="middle" textLength="16" lengthAdjust="spacingAndGlyphs">ALL</text></svg>
<svg class="a" style="left:84px;top:70px" width="16" height="16" viewBox="0 0 16 16"><circle cx="6" cy="6" r="4.5" fill="#fff" stroke="#000" stroke-width="1.3"/><path d="M3.5,6H8.5M6,3.5V8.5" stroke="#0000c0" stroke-width="1.3"/><path d="M9.5,9.5L15,15" stroke="#000" stroke-width="2.2"/></svg>
<svg class="a" style="left:107px;top:70px" width="16" height="16" viewBox="0 0 16 16"><circle cx="6" cy="6" r="4.5" fill="#fff" stroke="#000" stroke-width="1.3"/><path d="M3.5,6H8.5" stroke="#c00000" stroke-width="1.3"/><path d="M9.5,9.5L15,15" stroke="#000" stroke-width="2.2"/></svg>
<svg class="a" style="left:130px;top:70px" width="16" height="16" viewBox="0 0 16 16"><path d="M2.5,1.5H10L13.5,5V14.5H2.5Z" fill="#fff" stroke="#000"/><path d="M6,5H9V4L11,6L9,8V7H6ZM10,11H7V12L5,10L7,8V9H10Z" fill="#000"/></svg>
<div class="a" style="left:152px;top:69px;width:2px;height:18px;border-left:1px solid #aca899;border-right:1px solid #fff"></div>
<svg class="a" style="left:159px;top:70px" width="16" height="16" viewBox="0 0 16 16"><path d="M8,2V9L2,14M8,9L14,14" stroke="#c00000" fill="none"/><text x="10" y="5" font-size="5" font-family="Liberation Sans" fill="#000080">z</text><text x="0" y="12" font-size="5" font-family="Liberation Sans" fill="#000080">x</text><text x="13" y="11" font-size="5" font-family="Liberation Sans" fill="#000080">y</text></svg>
<svg class="a" style="left:180px;top:70px" width="16" height="16" viewBox="0 0 16 16"><path d="M3,1.5H13M3,3.5H13M3,5.5H13M3,7.5H13M3,9.5H13M3,11.5H13M3,13.5H13" stroke="#aca899" stroke-width="1" shape-rendering="crispEdges"/></svg>
<svg class="a" style="left:205px;top:70px" width="16" height="16" viewBox="0 0 16 16"><text x="8" y="6" font-size="6.5" font-family="Liberation Sans" fill="#aca899" text-anchor="middle" textLength="15" lengthAdjust="spacingAndGlyphs">PORT</text><path d="M1,7H15V15H1ZM1,10H15M1,12.5H15M4.5,7V15M8,7V15M11.5,7V15" stroke="#aca899" fill="none" stroke-width="0.8"/></svg>
<svg class="a" style="left:228px;top:70px" width="16" height="16" viewBox="0 0 16 16"><path d="M1,15L8,4V15Z" fill="#c00000"/><path d="M8,4L14,15H8Z" fill="#0000c0"/><path d="M8,4L15,15" stroke="#0000c0" fill="none"/><path d="M9,5Q12,1 15,5M13,3L15,5L15.5,2.5" stroke="#000" fill="none"/></svg>
<div class="a" style="left:251px;top:69px;width:2px;height:18px;border-left:1px solid #aca899;border-right:1px solid #fff"></div>
<svg class="a" style="left:257px;top:70px" width="16" height="16" viewBox="0 0 16 16"><path d="M0,6Q4,1 8,6Q12,11 16,6" fill="none" stroke="#c00000" stroke-width="2"/><path d="M0,9Q4,4 8,9Q12,14 16,9" fill="none" stroke="#00c000" stroke-width="2"/><path d="M0,12Q4,7 8,12Q12,17 16,12" fill="none" stroke="#0000c0" stroke-width="2"/></svg>
<svg class="a" style="left:280px;top:70px" width="16" height="16" viewBox="0 0 16 16"><g transform="translate(1,1)" fill="#ffffff"><path d="M1,5L4,2L8,6L12,2L14,6V9L12,6L8,10L4,6L1,9ZM3,12H13V11L15,13L13,15V14H3Z"/></g><g fill="#aca899"><path d="M1,5L4,2L8,6L12,2L14,6V9L12,6L8,10L4,6L1,9ZM3,12H13V11L15,13L13,15V14H3Z"/></g></svg>
<div class="a" style="left:302px;top:69px;width:2px;height:18px;border-left:1px solid #aca899;border-right:1px solid #fff"></div>
<svg class="a" style="left:308px;top:70px" width="16" height="16" viewBox="0 0 16 16"><g transform="translate(1,1)" fill="#ffffff"><path d="M2,1H15V15H2ZM4,3V6H7V3ZM9,4L12,4L12,7L9,7ZM4,9L8,13L12,9L10,9L10,11L6,11L6,9Z"/></g><g fill="#aca899"><path d="M2,1H15V15H2ZM4,3V6H7V3ZM9,4L12,4L12,7L9,7ZM4,9L8,13L12,9L10,9L10,11L6,11L6,9Z"/></g></svg>
<div class="a" style="left:331px;top:69px;width:2px;height:18px;border-left:1px solid #aca899;border-right:1px solid #fff"></div>
<svg class="a" style="left:338px;top:70px" width="16" height="16" viewBox="0 0 16 16"><circle cx="8" cy="6" r="5.5" fill="#ffff40"/><path d="M5,12H11M5,14H11M6,13H10" stroke="#404000" stroke-width="1"/></svg>
<div class="a" style="left:359px;top:69px;width:2px;height:18px;border-left:1px solid #aca899;border-right:1px solid #fff"></div>
<svg class="a" style="left:366px;top:70px" width="16" height="16" viewBox="0 0 16 16"><rect x="3.5" y="1.5" width="12" height="10" fill="#c000c0" stroke="#000"/><rect x="0.5" y="4.5" width="12" height="10" fill="#0000e0" stroke="#000"/><rect x="2" y="6" width="9" height="7" fill="#c000c0"/></svg>
<svg class="a" style="left:390px;top:70px" width="16" height="16" viewBox="0 0 16 16"><path d="M2,6L7,1L13,7L8,12Z" fill="#fff" stroke="#000"/><path d="M4,3L1,6L2,12" stroke="#000" fill="none"/><rect x="9" y="9" width="7" height="7" fill="#008080" stroke="#000" stroke-width="0.6"/><path d="M11,12H15" stroke="#00e0e0"/></svg>
<div class="a" style="left:1257px;top:69px;width:23px;height:3px;border-top:1px solid #fff;border-bottom:1px solid #aca899"></div>
<svg class="a" style="left:1260px;top:79px" width="16" height="16" viewBox="0 0 16 16"><path d="M0,10L5,4H16L11,10Z" fill="#00e000" stroke="#004000" stroke-width="0.5"/></svg>
<svg class="a" style="left:1260px;top:102px" width="16" height="16" viewBox="0 0 16 16"><path d="M1,2H15V6H10V15H6V6H1Z" fill="#00e000" stroke="#004000" stroke-width="0.5"/></svg>
<svg class="a" style="left:1260px;top:123px" width="16" height="16" viewBox="0 0 16 16"><path d="M1,1H5L8,6L11,1H15L10,9V15H6V9Z" fill="#00e000" stroke="#004000" stroke-width="0.5"/></svg>
<svg class="a" style="left:1260px;top:144px" width="16" height="16" viewBox="0 0 16 16"><path d="M1,6H5V5H8V3H15V12H8V10H5V9H1Z" fill="#00e000" stroke="#004000" stroke-width="0.5"/></svg>
<svg class="a" style="left:1260px;top:162px" width="16" height="16" viewBox="0 0 16 16"><path d="M2,3H13L15,5V15H10V8H2Z" fill="#00e000" stroke="#004000" stroke-width="0.5"/></svg>
<div class="a" style="left:1259px;top:189px;width:20px;height:2px;border-top:1px solid #aca899;border-bottom:1px solid #fff"></div>
<svg class="a" style="left:1260px;top:195px" width="16" height="16" viewBox="0 0 16 16"><ellipse cx="8" cy="8" rx="7" ry="4.5" fill="#00e000" stroke="#004000" stroke-width="0.5"/></svg>
<svg class="a" style="left:1260px;top:209px" width="16" height="16" viewBox="0 0 16 16"><ellipse cx="8" cy="8" rx="6.5" ry="4" fill="none" stroke="#00e000" stroke-width="2.5"/><ellipse cx="8" cy="8" rx="6.5" ry="4" fill="none" stroke="#004000" stroke-width="0.4"/></svg>
<svg class="a" style="left:1260px;top:223px" width="16" height="16" viewBox="0 0 16 16"><path d="M2,11Q8,1 14,11" fill="none" stroke="#00e000" stroke-width="3"/></svg>
<div class="a" style="left:1259px;top:252px;width:20px;height:2px;border-top:1px solid #aca899;border-bottom:1px solid #fff"></div>
<svg class="a" style="left:1260px;top:266px" width="16" height="16" viewBox="0 0 16 16"><path d="M2,5Q2,1 8,1Q14,1 14,5V13Q14,15 8,15Q2,15 2,13Z" fill="#00e000" stroke="#004000"/><path d="M2,5Q5,7 5,15" stroke="#004000" fill="none"/><path d="M2,5V13Q2,15 5,15V7Z" fill="#008000"/></svg>
<svg class="a" style="left:1260px;top:283px" width="16" height="16" viewBox="0 0 16 16"><path d="M1,5L4,2L15,11L12,15Z" fill="#00e000" stroke="#004000"/><ellipse cx="3" cy="4" rx="3" ry="2.5" fill="#008000"/><ellipse cx="13" cy="13" rx="2.5" ry="2" fill="#006000"/></svg>
<div class="a" style="left:1259px;top:311px;width:20px;height:2px;border-top:1px solid #aca899;border-bottom:1px solid #fff"></div>
<svg class="a" style="left:1260px;top:316px" width="16" height="16" viewBox="0 0 16 16"><circle cx="8" cy="8" r="7" fill="#00e000" stroke="#004000"/><path d="M5,8H11M8,5V11" stroke="#fff" stroke-width="1.5"/></svg>
<div class="a" style="left:1259px;top:339px;width:20px;height:2px;border-top:1px solid #aca899;border-bottom:1px solid #fff"></div>
<svg class="a" style="left:1260px;top:345px" width="16" height="16" viewBox="0 0 16 16"><path d="M4,3Q12,1 12,4Q12,6 4,6Q4,9 12,8Q12,11 4,11Q4,14 12,13" fill="none" stroke="#000080" stroke-width="1.2"/></svg>
<svg class="a" style="left:1260px;top:367px" width="16" height="16" viewBox="0 0 16 16"><path d="M8,2Q14,3 12,6Q4,6 3,9Q4,12 13,11Q14,14 8,14Q3,14 5,11" fill="none" stroke="#000080" stroke-width="1.2"/></svg>
<div class="a" style="left:1259px;top:389px;width:20px;height:2px;border-top:1px solid #aca899;border-bottom:1px solid #fff"></div>
<svg class="a" style="left:1260px;top:395px" width="16" height="16" viewBox="0 0 16 16"><rect x="1" y="1" width="14" height="14" fill="#000080"/><circle cx="8" cy="8" r="5" fill="#fff"/></svg>
<svg class="a" style="left:1260px;top:417px" width="16" height="16" viewBox="0 0 16 16"><rect x="0" y="2" width="16" height="12" fill="#000080"/><circle cx="8" cy="8" r="5" fill="#fff"/></svg>
<div class="a" style="left:1259px;top:439px;width:20px;height:2px;border-top:1px solid #aca899;border-bottom:1px solid #fff"></div>
<svg class="a" style="left:1260px;top:444px" width="16" height="16" viewBox="0 0 16 16"><path d="M3,13V3H13V13H5V5H11V11H7V7H9V9" fill="none" stroke="#000080" stroke-width="1.2"/><path d="M1,15H15" stroke="#000080"/></svg>
<svg class="a" style="left:1260px;top:467px" width="16" height="16" viewBox="0 0 16 16"><path d="M8,8Q10,8 10,10Q10,13 6,12Q2,10 4,6Q7,3 11,4Q15,6 14,10Q13,14 8,15" fill="none" stroke="#000080" stroke-width="1.2"/><path d="M1,12H6" stroke="#000080"/></svg>
<svg class="a" style="left:1260px;top:490px" width="16" height="16" viewBox="0 0 16 16"><circle cx="8" cy="8" r="6.5" fill="none" stroke="#000080" stroke-width="1.2"/><circle cx="8" cy="8" r="4" fill="none" stroke="#000080" stroke-width="1.2"/><circle cx="8" cy="8" r="1.5" fill="none" stroke="#000080" stroke-width="1.2"/></svg>
<div class="a" style="left:1259px;top:512px;width:20px;height:2px;border-top:1px solid #aca899;border-bottom:1px solid #fff"></div>
<svg class="a" style="left:1260px;top:518px" width="16" height="16" viewBox="0 0 16 16"><rect x="2" y="1" width="12" height="14" rx="2" fill="none" stroke="#000080" stroke-width="1.3"/><path d="M5,3V13M8,3V13M11,3V13" stroke="#000080" stroke-width="1.3"/></svg>
<svg class="a" style="left:1260px;top:540px" width="16" height="16" viewBox="0 0 16 16"><rect x="0" y="9" width="16" height="6" fill="#00e0ff"/><path d="M3,9V4H13V9" fill="none" stroke="#000080" stroke-width="2"/><path d="M0,15H16" stroke="#000080" stroke-width="1.5"/></svg>
<svg class="a" style="left:1260px;top:562px" width="16" height="16" viewBox="0 0 16 16"><path d="M1,13L8,5H16V13Z" fill="#aca899"/><path d="M1,13H16" stroke="#fff"/><path d="M8,5L14,2" stroke="#aca899"/></svg>
<svg class="a" style="left:1260px;top:584px" width="16" height="16" viewBox="0 0 16 16"><rect x="0" y="6" width="16" height="8" fill="#ffff00"/><path d="M3,10Q3,3 8,3Q13,3 13,10Z" fill="#0000c0"/><path d="M0,14H16" stroke="#0000c0" stroke-width="2"/></svg>
<div class="a" style="left:1257px;top:602px;width:23px;height:2px;border-top:1px solid #aca899;border-bottom:1px solid #fff"></div>
<div class="a" style="left:1257px;top:809px;width:23px;height:2px;border-top:1px solid #aca899;border-bottom:1px solid #fff"></div>
<svg width="1280" height="969" style="position:absolute;left:0;top:0" shape-rendering="auto">
<defs><clipPath id="vc"><rect x="2" y="93" width="1253" height="699"/></clipPath></defs>
<g clip-path="url(#vc)">
<rect x="2" y="93" width="1253" height="699" fill="#000"/>
<polygon points="24,93 167,93 171.5,132.6 2,265.4 2,110" fill="#16120e"/>
<polygon points="167,93 376,93 1255,472 1255,603.6 171.5,132.6" fill="#3e3333"/>
<polygon points="171.5,132.6 1255,603.6 1255,792 358,792 2,636 2,265.4" fill="#43603f"/>
<polygon points="2,636 358,792 56,792 2,768" fill="#474d3e"/>
<polygon points="1220,792 1255,767 1255,792" fill="#3d4f38"/>
<path d="M2,110.5L24,93 M167,93L171.5,132.6 M2,265.4L171.5,132.6L1255,603.6 M376,93L1255,472 M2,636L358,792 M2,768L56,792 M1220,792L1255,767" stroke="#fff" stroke-width="1" fill="none"/>
<path d="M142,792L482,518" stroke="#fff" stroke-opacity="0.85" stroke-width="1" fill="none"/>
<g opacity="0.5" fill="#5a5050"><polygon points="354.9,423.8 403.4,444.8 404.6,450.8 356.1,429.8"/><polygon points="352.1,430.2 400.6,451.2 401.8,457.2 353.3,436.2"/><polygon points="356.1,429.8 404.6,450.8 401.8,457.2 353.3,436.2"/></g>
<polygon points="354.9,423.8 403.4,444.8 400.6,451.2 352.1,430.2" fill="#a9e5ab" fill-opacity="0.6"/>
<path d="M354.9,423.8L403.4,444.8M352.1,430.2L400.6,451.2M356.1,429.8L404.6,450.8M353.3,436.2L401.8,457.2M354.9,423.8L356.1,429.8M352.1,430.2L353.3,436.2M403.4,444.8L404.6,450.8M400.6,451.2L401.8,457.2" fill="none" stroke="#e8f0e0" stroke-width="1"/>
<g opacity="0.5" fill="#5a5050"><polygon points="563.4,513.8 946.4,680.8 947.6,686.8 564.6,519.8"/><polygon points="560.6,520.2 943.6,687.2 944.8,693.2 561.8,526.2"/><polygon points="564.6,519.8 947.6,686.8 944.8,693.2 561.8,526.2"/></g>
<polygon points="563.4,513.8 946.4,680.8 943.6,687.2 560.6,520.2" fill="#a9e5ab" fill-opacity="0.6"/>
<path d="M563.4,513.8L946.4,680.8M560.6,520.2L943.6,687.2M564.6,519.8L947.6,686.8M561.8,526.2L944.8,693.2M563.4,513.8L564.6,519.8M560.6,520.2L561.8,526.2M946.4,680.8L947.6,686.8M943.6,687.2L944.8,693.2" fill="none" stroke="#e8f0e0" stroke-width="1"/>
<g opacity="0.5" fill="#5a5050"><polygon points="488.8,481.3 649.8,352.3 651.0,358.3 490.0,487.3"/><polygon points="493.2,486.7 654.2,357.7 655.4,363.7 494.4,492.7"/><polygon points="490.0,487.3 651.0,358.3 655.4,363.7 494.4,492.7"/></g>
<polygon points="488.8,481.3 649.8,352.3 654.2,357.7 493.2,486.7" fill="#a9e5ab" fill-opacity="0.6"/>
<path d="M488.8,481.3L649.8,352.3M493.2,486.7L654.2,357.7M490.0,487.3L651.0,358.3M494.4,492.7L655.4,363.7M488.8,481.3L490.0,487.3M493.2,486.7L494.4,492.7M649.8,352.3L651.0,358.3M654.2,357.7L655.4,363.7" fill="none" stroke="#e8f0e0" stroke-width="1"/>
<g opacity="0.55" fill="#787064"><polygon points="52.1,69.2 81.0,90.4 82.5,100.4 53.6,79.2"/><polygon points="47.9,74.8 79.0,97.6 80.5,107.6 49.4,84.8"/><polygon points="81.0,90.4 190.4,83.6 191.9,93.6 82.5,100.4"/><polygon points="79.0,97.6 193.6,90.4 195.1,100.4 80.5,107.6"/><polygon points="190.4,83.6 212.5,60.6 214.0,70.6 191.9,93.6"/><polygon points="193.6,90.4 217.5,65.4 219.0,75.4 195.1,100.4"/><polygon points="53.6,79.2 82.5,100.4 191.9,93.6 214.0,70.6 219.0,75.4 195.1,100.4 80.5,107.6 49.4,84.8"/></g>
<polygon points="52.1,69.2 81.0,90.4 190.4,83.6 212.5,60.6 217.5,65.4 193.6,90.4 79.0,97.6 47.9,74.8" fill="#ebdfd6" fill-opacity="0.6"/>
<path d="M52.1,69.2L81.0,90.4L190.4,83.6L212.5,60.6M47.9,74.8L79.0,97.6L193.6,90.4L217.5,65.4M53.6,79.2L82.5,100.4L191.9,93.6L214.0,70.6M49.4,84.8L80.5,107.6L195.1,100.4L219.0,75.4M52.1,69.2L53.6,79.2M47.9,74.8L49.4,84.8M81.0,90.4L82.5,100.4M79.0,97.6L80.5,107.6M190.4,83.6L191.9,93.6M193.6,90.4L195.1,100.4M212.5,60.6L214.0,70.6M217.5,65.4L219.0,75.4" fill="none" stroke="#ffffff" stroke-width="1"/>
<g opacity="0.55" fill="#3a3030"><polygon points="352.2,117.2 326.2,86.2 328.6,98.2 354.6,129.2"/><polygon points="359.8,110.8 333.8,79.8 336.2,91.8 362.2,122.8"/><polygon points="354.6,129.2 328.6,98.2 336.2,91.8 362.2,122.8"/></g>
<polygon points="352.2,117.2 326.2,86.2 333.8,79.8 359.8,110.8" fill="#ebdfd6" fill-opacity="0.6"/>
<path d="M352.2,117.2L326.2,86.2M359.8,110.8L333.8,79.8M354.6,129.2L328.6,98.2M362.2,122.8L336.2,91.8M352.2,117.2L354.6,129.2M359.8,110.8L362.2,122.8M326.2,86.2L328.6,98.2M333.8,79.8L336.2,91.8" fill="none" stroke="#ffffff" stroke-width="1"/>
<g opacity="0.55" fill="#3a3030"><polygon points="313.4,203.1 351.4,112.1 353.8,124.1 315.8,215.1"/><polygon points="322.6,206.9 360.6,115.9 363.0,127.9 325.0,218.9"/><polygon points="315.8,215.1 353.8,124.1 363.0,127.9 325.0,218.9"/></g>
<polygon points="313.4,203.1 351.4,112.1 360.6,115.9 322.6,206.9" fill="#ebdfd6" fill-opacity="0.6"/>
<path d="M313.4,203.1L351.4,112.1M322.6,206.9L360.6,115.9M315.8,215.1L353.8,124.1M325.0,218.9L363.0,127.9M313.4,203.1L315.8,215.1M322.6,206.9L325.0,218.9M351.4,112.1L353.8,124.1M360.6,115.9L363.0,127.9" fill="none" stroke="#ffffff" stroke-width="1"/>
<g opacity="0.55" fill="#787064"><polygon points="317.1,208.4 207.8,180.6 209.3,190.6 318.6,218.4"/><polygon points="318.9,201.6 208.2,173.4 209.7,183.4 320.4,211.6"/><polygon points="207.8,180.6 100.9,198.2 102.4,208.2 209.3,190.6"/><polygon points="208.2,173.4 97.1,191.8 98.6,201.8 209.7,183.4"/><polygon points="100.9,198.2 65.8,244.5 67.3,254.5 102.4,208.2"/><polygon points="97.1,191.8 56.2,245.5 57.7,255.5 98.6,201.8"/><polygon points="65.8,244.5 109.0,281.3 110.5,291.3 67.3,254.5"/><polygon points="56.2,245.5 107.0,288.7 108.5,298.7 57.7,255.5"/><polygon points="109.0,281.3 216.7,264.7 218.2,274.7 110.5,291.3"/><polygon points="107.0,288.7 219.3,271.3 220.8,281.3 108.5,298.7"/><polygon points="216.7,264.7 316.1,202.0 317.6,212.0 218.2,274.7"/><polygon points="219.3,271.3 319.9,208.0 321.4,218.0 220.8,281.3"/><polygon points="318.6,218.4 209.3,190.6 102.4,208.2 67.3,254.5 110.5,291.3 218.2,274.7 317.6,212.0 321.4,218.0 220.8,281.3 108.5,298.7 57.7,255.5 98.6,201.8 209.7,183.4 320.4,211.6"/></g>
<polygon points="317.1,208.4 207.8,180.6 100.9,198.2 65.8,244.5 109.0,281.3 216.7,264.7 316.1,202.0 319.9,208.0 219.3,271.3 107.0,288.7 56.2,245.5 97.1,191.8 208.2,173.4 318.9,201.6" fill="#ebdfd6" fill-opacity="0.6"/>
<path d="M317.1,208.4L207.8,180.6L100.9,198.2L65.8,244.5L109.0,281.3L216.7,264.7L316.1,202.0M318.9,201.6L208.2,173.4L97.1,191.8L56.2,245.5L107.0,288.7L219.3,271.3L319.9,208.0M318.6,218.4L209.3,190.6L102.4,208.2L67.3,254.5L110.5,291.3L218.2,274.7L317.6,212.0M320.4,211.6L209.7,183.4L98.6,201.8L57.7,255.5L108.5,298.7L220.8,281.3L321.4,218.0M317.1,208.4L318.6,218.4M318.9,201.6L320.4,211.6M207.8,180.6L209.3,190.6M208.2,173.4L209.7,183.4M100.9,198.2L102.4,208.2M97.1,191.8L98.6,201.8M65.8,244.5L67.3,254.5M56.2,245.5L57.7,255.5M109.0,281.3L110.5,291.3M107.0,288.7L108.5,298.7M216.7,264.7L218.2,274.7M219.3,271.3L220.8,281.3M316.1,202.0L317.6,212.0M319.9,208.0L321.4,218.0" fill="none" stroke="#ffffff" stroke-width="1"/>
<g opacity="0.55" fill="#3a3030"><polygon points="340.3,390.4 369.5,301.6 371.9,313.6 342.7,402.4"/><polygon points="349.7,393.6 380.5,300.4 382.9,312.4 352.1,405.6"/><polygon points="369.5,301.6 313.7,208.6 316.1,220.6 371.9,313.6"/><polygon points="380.5,300.4 322.3,203.4 324.7,215.4 382.9,312.4"/><polygon points="342.7,402.4 371.9,313.6 316.1,220.6 324.7,215.4 382.9,312.4 352.1,405.6"/></g>
<polygon points="340.3,390.4 369.5,301.6 313.7,208.6 322.3,203.4 380.5,300.4 349.7,393.6" fill="#ebdfd6" fill-opacity="0.6"/>
<path d="M340.3,390.4L369.5,301.6L313.7,208.6M349.7,393.6L380.5,300.4L322.3,203.4M342.7,402.4L371.9,313.6L316.1,220.6M352.1,405.6L382.9,312.4L324.7,215.4M340.3,390.4L342.7,402.4M349.7,393.6L352.1,405.6M369.5,301.6L371.9,313.6M380.5,300.4L382.9,312.4M313.7,208.6L316.1,220.6M322.3,203.4L324.7,215.4" fill="none" stroke="#ffffff" stroke-width="1"/>
<g opacity="0.55" fill="#787064"><polygon points="350.7,429.2 236.3,383.5 237.8,393.5 352.2,439.2"/><polygon points="353.3,422.8 237.7,376.5 239.2,386.5 354.8,432.8"/><polygon points="236.3,383.5 125.7,382.5 127.2,392.5 237.8,393.5"/><polygon points="237.7,376.5 122.3,375.5 123.8,385.5 239.2,386.5"/><polygon points="125.7,382.5 90.8,429.4 92.3,439.4 127.2,392.5"/><polygon points="122.3,375.5 81.2,430.6 82.7,440.6 123.8,385.5"/><polygon points="90.8,429.4 139.0,468.3 140.5,478.3 92.3,439.4"/><polygon points="81.2,430.6 137.0,475.7 138.5,485.7 82.7,440.6"/><polygon points="139.0,468.3 242.8,454.6 244.3,464.6 140.5,478.3"/><polygon points="137.0,475.7 245.2,461.4 246.7,471.4 138.5,485.7"/><polygon points="242.8,454.6 343.1,389.1 344.6,399.1 244.3,464.6"/><polygon points="245.2,461.4 346.9,394.9 348.4,404.9 246.7,471.4"/><polygon points="352.2,439.2 237.8,393.5 127.2,392.5 92.3,439.4 140.5,478.3 244.3,464.6 344.6,399.1 348.4,404.9 246.7,471.4 138.5,485.7 82.7,440.6 123.8,385.5 239.2,386.5 354.8,432.8"/></g>
<polygon points="350.7,429.2 236.3,383.5 125.7,382.5 90.8,429.4 139.0,468.3 242.8,454.6 343.1,389.1 346.9,394.9 245.2,461.4 137.0,475.7 81.2,430.6 122.3,375.5 237.7,376.5 353.3,422.8" fill="#ebdfd6" fill-opacity="0.6"/>
<path d="M350.7,429.2L236.3,383.5L125.7,382.5L90.8,429.4L139.0,468.3L242.8,454.6L343.1,389.1M353.3,422.8L237.7,376.5L122.3,375.5L81.2,430.6L137.0,475.7L245.2,461.4L346.9,394.9M352.2,439.2L237.8,393.5L127.2,392.5L92.3,439.4L140.5,478.3L244.3,464.6L344.6,399.1M354.8,432.8L239.2,386.5L123.8,385.5L82.7,440.6L138.5,485.7L246.7,471.4L348.4,404.9M350.7,429.2L352.2,439.2M353.3,422.8L354.8,432.8M236.3,383.5L237.8,393.5M237.7,376.5L239.2,386.5M125.7,382.5L127.2,392.5M122.3,375.5L123.8,385.5M90.8,429.4L92.3,439.4M81.2,430.6L82.7,440.6M139.0,468.3L140.5,478.3M137.0,475.7L138.5,485.7M242.8,454.6L244.3,464.6M245.2,461.4L246.7,471.4M343.1,389.1L344.6,399.1M346.9,394.9L348.4,404.9" fill="none" stroke="#ffffff" stroke-width="1"/>
<g opacity="0.55" fill="#3a3030"><polygon points="602.1,80.2 664.1,172.2 666.5,184.2 604.5,92.2"/><polygon points="593.9,85.8 655.9,177.8 658.3,189.8 596.3,97.8"/><polygon points="604.5,92.2 666.5,184.2 658.3,189.8 596.3,97.8"/></g>
<polygon points="602.1,80.2 664.1,172.2 655.9,177.8 593.9,85.8" fill="#ebdfd6" fill-opacity="0.6"/>
<path d="M602.1,80.2L664.1,172.2M593.9,85.8L655.9,177.8M604.5,92.2L666.5,184.2M596.3,97.8L658.3,189.8M602.1,80.2L604.5,92.2M593.9,85.8L596.3,97.8M664.1,172.2L666.5,184.2M655.9,177.8L658.3,189.8" fill="none" stroke="#ffffff" stroke-width="1"/>
<g opacity="0.55" fill="#787064"><polygon points="658.3,172.0 758.9,114.6 760.4,124.6 659.8,182.0"/><polygon points="661.7,178.0 761.1,121.4 762.6,131.4 663.2,188.0"/><polygon points="758.9,114.6 872.0,102.4 873.5,112.4 760.4,124.6"/><polygon points="761.1,121.4 870.0,109.6 871.5,119.6 762.6,131.4"/><polygon points="872.0,102.4 925.9,144.4 927.4,154.4 873.5,112.4"/><polygon points="870.0,109.6 916.1,145.6 917.6,155.6 871.5,119.6"/><polygon points="925.9,144.4 885.9,197.3 887.4,207.3 927.4,154.4"/><polygon points="916.1,145.6 882.1,190.7 883.6,200.7 917.6,155.6"/><polygon points="885.9,197.3 770.7,210.6 772.2,220.6 887.4,207.3"/><polygon points="882.1,190.7 771.3,203.4 772.8,213.4 883.6,200.7"/><polygon points="770.7,210.6 659.0,178.4 660.5,188.4 772.2,220.6"/><polygon points="771.3,203.4 661.0,171.6 662.5,181.6 772.8,213.4"/><polygon points="659.8,182.0 760.4,124.6 873.5,112.4 927.4,154.4 887.4,207.3 772.2,220.6 660.5,188.4 662.5,181.6 772.8,213.4 883.6,200.7 917.6,155.6 871.5,119.6 762.6,131.4 663.2,188.0"/></g>
<polygon points="658.3,172.0 758.9,114.6 872.0,102.4 925.9,144.4 885.9,197.3 770.7,210.6 659.0,178.4 661.0,171.6 771.3,203.4 882.1,190.7 916.1,145.6 870.0,109.6 761.1,121.4 661.7,178.0" fill="#ebdfd6" fill-opacity="0.6"/>
<path d="M658.3,172.0L758.9,114.6L872.0,102.4L925.9,144.4L885.9,197.3L770.7,210.6L659.0,178.4M661.7,178.0L761.1,121.4L870.0,109.6L916.1,145.6L882.1,190.7L771.3,203.4L661.0,171.6M659.8,182.0L760.4,124.6L873.5,112.4L927.4,154.4L887.4,207.3L772.2,220.6L660.5,188.4M663.2,188.0L762.6,131.4L871.5,119.6L917.6,155.6L883.6,200.7L772.8,213.4L662.5,181.6M658.3,172.0L659.8,182.0M661.7,178.0L663.2,188.0M758.9,114.6L760.4,124.6M761.1,121.4L762.6,131.4M872.0,102.4L873.5,112.4M870.0,109.6L871.5,119.6M925.9,144.4L927.4,154.4M916.1,145.6L917.6,155.6M885.9,197.3L887.4,207.3M882.1,190.7L883.6,200.7M770.7,210.6L772.2,220.6M771.3,203.4L772.8,213.4M659.0,178.4L660.5,188.4M661.0,171.6L662.5,181.6" fill="none" stroke="#ffffff" stroke-width="1"/>
<g opacity="0.55" fill="#3a3030"><polygon points="664.8,176.6 631.5,278.1 633.9,290.1 667.2,188.6"/><polygon points="655.2,173.4 620.5,279.9 622.9,291.9 657.6,185.4"/><polygon points="631.5,278.1 687.1,355.1 689.5,367.1 633.9,290.1"/><polygon points="620.5,279.9 678.9,360.9 681.3,372.9 622.9,291.9"/><polygon points="667.2,188.6 633.9,290.1 689.5,367.1 681.3,372.9 622.9,291.9 657.6,185.4"/></g>
<polygon points="664.8,176.6 631.5,278.1 687.1,355.1 678.9,360.9 620.5,279.9 655.2,173.4" fill="#ebdfd6" fill-opacity="0.6"/>
<path d="M664.8,176.6L631.5,278.1L687.1,355.1M655.2,173.4L620.5,279.9L678.9,360.9M667.2,188.6L633.9,290.1L689.5,367.1M657.6,185.4L622.9,291.9L681.3,372.9M664.8,176.6L667.2,188.6M655.2,173.4L657.6,185.4M631.5,278.1L633.9,290.1M620.5,279.9L622.9,291.9M687.1,355.1L689.5,367.1M678.9,360.9L681.3,372.9" fill="none" stroke="#ffffff" stroke-width="1"/>
<g opacity="0.55" fill="#787064"><polygon points="681.3,354.9 785.0,297.6 786.5,307.6 682.8,364.9"/><polygon points="684.7,361.1 787.0,304.4 788.5,314.4 686.2,371.1"/><polygon points="785.0,297.6 898.0,287.4 899.5,297.4 786.5,307.6"/><polygon points="787.0,304.4 896.0,294.6 897.5,304.6 788.5,314.4"/><polygon points="898.0,287.4 952.0,328.4 953.5,338.4 899.5,297.4"/><polygon points="896.0,294.6 942.0,329.6 943.5,339.6 897.5,304.6"/><polygon points="952.0,328.4 908.8,382.3 910.3,392.3 953.5,338.4"/><polygon points="942.0,329.6 905.2,375.7 906.7,385.7 943.5,339.6"/><polygon points="908.8,382.3 796.7,395.6 798.2,405.6 910.3,392.3"/><polygon points="905.2,375.7 797.3,388.4 798.8,398.4 906.7,385.7"/><polygon points="796.7,395.6 682.0,361.4 683.5,371.4 798.2,405.6"/><polygon points="797.3,388.4 684.0,354.6 685.5,364.6 798.8,398.4"/><polygon points="682.8,364.9 786.5,307.6 899.5,297.4 953.5,338.4 910.3,392.3 798.2,405.6 683.5,371.4 685.5,364.6 798.8,398.4 906.7,385.7 943.5,339.6 897.5,304.6 788.5,314.4 686.2,371.1"/></g>
<polygon points="681.3,354.9 785.0,297.6 898.0,287.4 952.0,328.4 908.8,382.3 796.7,395.6 682.0,361.4 684.0,354.6 797.3,388.4 905.2,375.7 942.0,329.6 896.0,294.6 787.0,304.4 684.7,361.1" fill="#ebdfd6" fill-opacity="0.6"/>
<path d="M681.3,354.9L785.0,297.6L898.0,287.4L952.0,328.4L908.8,382.3L796.7,395.6L682.0,361.4M684.7,361.1L787.0,304.4L896.0,294.6L942.0,329.6L905.2,375.7L797.3,388.4L684.0,354.6M682.8,364.9L786.5,307.6L899.5,297.4L953.5,338.4L910.3,392.3L798.2,405.6L683.5,371.4M686.2,371.1L788.5,314.4L897.5,304.6L943.5,339.6L906.7,385.7L798.8,398.4L685.5,364.6M681.3,354.9L682.8,364.9M684.7,361.1L686.2,371.1M785.0,297.6L786.5,307.6M787.0,304.4L788.5,314.4M898.0,287.4L899.5,297.4M896.0,294.6L897.5,304.6M952.0,328.4L953.5,338.4M942.0,329.6L943.5,339.6M908.8,382.3L910.3,392.3M905.2,375.7L906.7,385.7M796.7,395.6L798.2,405.6M797.3,388.4L798.8,398.4M682.0,361.4L683.5,371.4M684.0,354.6L685.5,364.6" fill="none" stroke="#ffffff" stroke-width="1"/>
<g opacity="0.55" fill="#3a3030"><polygon points="687.8,359.5 656.5,462.0 658.9,474.0 690.2,371.5"/><polygon points="678.2,356.5 645.5,464.0 647.9,476.0 680.6,368.5"/><polygon points="656.5,462.0 715.0,538.0 717.4,550.0 658.9,474.0"/><polygon points="645.5,464.0 707.0,544.0 709.4,556.0 647.9,476.0"/><polygon points="690.2,371.5 658.9,474.0 717.4,550.0 709.4,556.0 647.9,476.0 680.6,368.5"/></g>
<polygon points="687.8,359.5 656.5,462.0 715.0,538.0 707.0,544.0 645.5,464.0 678.2,356.5" fill="#ebdfd6" fill-opacity="0.6"/>
<path d="M687.8,359.5L656.5,462.0L715.0,538.0M678.2,356.5L645.5,464.0L707.0,544.0M690.2,371.5L658.9,474.0L717.4,550.0M680.6,368.5L647.9,476.0L709.4,556.0M687.8,359.5L690.2,371.5M678.2,356.5L680.6,368.5M656.5,462.0L658.9,474.0M645.5,464.0L647.9,476.0M715.0,538.0L717.4,550.0M707.0,544.0L709.4,556.0" fill="none" stroke="#ffffff" stroke-width="1"/>
<g opacity="0.55" fill="#787064"><polygon points="709.3,537.9 810.9,482.6 812.4,492.6 710.8,547.9"/><polygon points="712.7,544.1 813.1,489.4 814.6,499.4 714.2,554.1"/><polygon points="810.9,482.6 922.0,471.4 923.5,481.4 812.4,492.6"/><polygon points="813.1,489.4 920.0,478.6 921.5,488.6 814.6,499.4"/><polygon points="922.0,471.4 977.1,511.4 978.6,521.4 923.5,481.4"/><polygon points="920.0,478.6 966.9,512.6 968.4,522.6 921.5,488.6"/><polygon points="977.1,511.4 928.7,567.3 930.2,577.3 978.6,521.4"/><polygon points="966.9,512.6 925.3,560.7 926.8,570.7 968.4,522.6"/><polygon points="928.7,567.3 822.7,578.6 824.2,588.6 930.2,577.3"/><polygon points="925.3,560.7 823.3,571.4 824.8,581.4 926.8,570.7"/><polygon points="822.7,578.6 710.0,544.3 711.5,554.3 824.2,588.6"/><polygon points="823.3,571.4 712.0,537.7 713.5,547.7 824.8,581.4"/><polygon points="710.8,547.9 812.4,492.6 923.5,481.4 978.6,521.4 930.2,577.3 824.2,588.6 711.5,554.3 713.5,547.7 824.8,581.4 926.8,570.7 968.4,522.6 921.5,488.6 814.6,499.4 714.2,554.1"/></g>
<polygon points="709.3,537.9 810.9,482.6 922.0,471.4 977.1,511.4 928.7,567.3 822.7,578.6 710.0,544.3 712.0,537.7 823.3,571.4 925.3,560.7 966.9,512.6 920.0,478.6 813.1,489.4 712.7,544.1" fill="#ebdfd6" fill-opacity="0.6"/>
<path d="M709.3,537.9L810.9,482.6L922.0,471.4L977.1,511.4L928.7,567.3L822.7,578.6L710.0,544.3M712.7,544.1L813.1,489.4L920.0,478.6L966.9,512.6L925.3,560.7L823.3,571.4L712.0,537.7M710.8,547.9L812.4,492.6L923.5,481.4L978.6,521.4L930.2,577.3L824.2,588.6L711.5,554.3M714.2,554.1L814.6,499.4L921.5,488.6L968.4,522.6L926.8,570.7L824.8,581.4L713.5,547.7M709.3,537.9L710.8,547.9M712.7,544.1L714.2,554.1M810.9,482.6L812.4,492.6M813.1,489.4L814.6,499.4M922.0,471.4L923.5,481.4M920.0,478.6L921.5,488.6M977.1,511.4L978.6,521.4M966.9,512.6L968.4,522.6M928.7,567.3L930.2,577.3M925.3,560.7L926.8,570.7M822.7,578.6L824.2,588.6M823.3,571.4L824.8,581.4M710.0,544.3L711.5,554.3M712.0,537.7L713.5,547.7" fill="none" stroke="#ffffff" stroke-width="1"/>
<g opacity="0.55" fill="#3a3030"><polygon points="715.7,542.6 681.6,646.1 684.0,658.1 718.1,554.6"/><polygon points="706.3,539.4 670.4,647.9 672.8,659.9 708.7,551.4"/><polygon points="681.6,646.1 740.0,723.0 742.4,735.0 684.0,658.1"/><polygon points="670.4,647.9 732.0,729.0 734.4,741.0 672.8,659.9"/><polygon points="718.1,554.6 684.0,658.1 742.4,735.0 734.4,741.0 672.8,659.9 708.7,551.4"/></g>
<polygon points="715.7,542.6 681.6,646.1 740.0,723.0 732.0,729.0 670.4,647.9 706.3,539.4" fill="#ebdfd6" fill-opacity="0.6"/>
<path d="M715.7,542.6L681.6,646.1L740.0,723.0M706.3,539.4L670.4,647.9L732.0,729.0M718.1,554.6L684.0,658.1L742.4,735.0M708.7,551.4L672.8,659.9L734.4,741.0M715.7,542.6L718.1,554.6M706.3,539.4L708.7,551.4M681.6,646.1L684.0,658.1M670.4,647.9L672.8,659.9M740.0,723.0L742.4,735.0M732.0,729.0L734.4,741.0" fill="none" stroke="#ffffff" stroke-width="1"/>
<g opacity="0.55" fill="#787064"><polygon points="737.0,722.6 847.3,755.4 848.8,765.4 738.5,732.6"/><polygon points="735.0,729.4 846.7,762.6 848.2,772.6 736.5,739.4"/><polygon points="847.3,755.4 946.8,741.6 948.3,751.6 848.8,765.4"/><polygon points="846.7,762.6 949.2,748.4 950.7,758.4 848.2,772.6"/><polygon points="946.8,741.6 991.1,714.2 992.6,724.2 948.3,751.6"/><polygon points="949.2,748.4 1004.9,713.8 1006.4,723.8 950.7,758.4"/><polygon points="991.1,714.2 943.3,688.1 944.8,698.1 992.6,724.2"/><polygon points="1004.9,713.8 946.7,681.9 948.2,691.9 1006.4,723.8"/><polygon points="738.5,732.6 848.8,765.4 948.3,751.6 992.6,724.2 944.8,698.1 948.2,691.9 1006.4,723.8 950.7,758.4 848.2,772.6 736.5,739.4"/></g>
<polygon points="737.0,722.6 847.3,755.4 946.8,741.6 991.1,714.2 943.3,688.1 946.7,681.9 1004.9,713.8 949.2,748.4 846.7,762.6 735.0,729.4" fill="#ebdfd6" fill-opacity="0.6"/>
<path d="M737.0,722.6L847.3,755.4L946.8,741.6L991.1,714.2L943.3,688.1M735.0,729.4L846.7,762.6L949.2,748.4L1004.9,713.8L946.7,681.9M738.5,732.6L848.8,765.4L948.3,751.6L992.6,724.2L944.8,698.1M736.5,739.4L848.2,772.6L950.7,758.4L1006.4,723.8L948.2,691.9M737.0,722.6L738.5,732.6M735.0,729.4L736.5,739.4M847.3,755.4L848.8,765.4M846.7,762.6L848.2,772.6M946.8,741.6L948.3,751.6M949.2,748.4L950.7,758.4M991.1,714.2L992.6,724.2M1004.9,713.8L1006.4,723.8M943.3,688.1L944.8,698.1M946.7,681.9L948.2,691.9" fill="none" stroke="#ffffff" stroke-width="1"/>
<path d="M648,352L655,350L658,356L657.5,371L650,371L648,366Z" fill="#607060" fill-opacity="0.6" stroke="#fff" stroke-width="1"/>
<path d="M655,350L653,368M658,356L666,349M657,364L673,357" stroke="#fff" stroke-width="1" fill="none"/>
<polygon points="465,491 461,508 482,517 508,510 490,501" fill="#8b5a14" stroke="#fff" stroke-width="1"/>
<path d="M461,508L482,517L508,510" stroke="#000" stroke-width="1.2" fill="none" transform="translate(0,1.5)"/>
<polygon points="421,446 554,504 549,515 416,457" fill="#9ab0b8" fill-opacity="0.8"/>
<polygon points="416,457 549,515 547,527 414,468" fill="#8a7f8c" fill-opacity="0.9"/>
<polygon points="401,444 421,446 416,457 405,452" fill="#c0c8b8" fill-opacity="0.7"/>
<polygon points="405,452 416,457 414,468 403,460" fill="#a09888" fill-opacity="0.7"/>
<polygon points="554,504 563,514 561,522 549,515" fill="#c0c8b8" fill-opacity="0.7"/>
<polygon points="549,515 561,522 560,530 547,527" fill="#a09888" fill-opacity="0.7"/>
<path d="M401,444L421,446L554,504L563,514M416,457L549,515L561,522M414,468L547,527L560,530M421,446L416,457L414,468M554,504L549,515L547,527M401,444L405,452L403,460L414,468" stroke="#fff" stroke-width="1" fill="none"/>
<path d="M478,494L494,481M484,501L500,488" stroke="#e8d0e0" stroke-width="1" fill="none" opacity="0.8"/>
<polygon points="483,488 497,493 504,498 490,497" fill="#c8a8a0" fill-opacity="0.5" stroke="#f0d8e0" stroke-width="0.8"/>
<g fill="none" stroke-width="1.8" stroke-linecap="round" stroke-linejoin="round"><path d="M159,704L155,670 M151,675L154.5,670L157.5,674 M159,643L143.5,656L161,661L145,673" stroke="#7a86e8"/><path d="M159,704L126,690 M131.5,688.5L126,690L127,694.5 M97,689L131,682 M113.5,675L114,696" stroke="#ec7a78"/><path d="M159,704L130,726 M129.6,722L130,726L135.5,727 M100,739L119,735 M119,735L127,729 M119,735L120,747" stroke="#78e878"/></g>
</g>
<path d="M1.5,792.5H1255.5V92" stroke="#fff" stroke-width="1" fill="none"/>
<path d="M1.5,792V92.5H1255" stroke="#aca899" stroke-width="1" fill="none"/>
</svg>
<div class="a" style="left:107px;top:795px;width:207px;height:17px;border-left:1px solid #aca899;border-top:1px solid #aca899;border-right:1px solid #fff;border-bottom:1px solid #fff;background:none;white-space:nowrap;overflow:hidden"><span class="a" style="left:2px;top:1px">Angles : (42.8719, 34.608, 156.43)</span></div>
<div class="a" style="left:315px;top:795px;width:166px;height:17px;border-left:1px solid #aca899;border-top:1px solid #aca899;border-right:1px solid #fff;border-bottom:1px solid #fff;background:none;white-space:nowrap;overflow:hidden"><span class="a" style="left:2px;top:1px">Scale : (100%, 100%, 100%)</span></div>
<div class="a" style="left:482px;top:795px;width:57px;height:17px;border-left:1px solid #aca899;border-top:1px solid #aca899;border-right:1px solid #fff;border-bottom:1px solid #fff;background:none;white-space:nowrap;overflow:hidden"><span class="a" style="left:2px;top:1px">225%</span></div>
<svg class="a" style="left:3px;top:817px" width="9" height="8"><path d="M1,1L7,7M7,1L1,7" stroke="#000" stroke-width="1.6"/></svg>
<div class="a" style="left:1px;top:828px;width:14px;height:116px;background:#8caae6;border-left:1px solid #fff"></div>
<div class="a" style="left:2px;top:944px;width:12px;transform-origin:0 0;transform:rotate(-90deg);color:#fff;font-size:11px;white-space:nowrap;letter-spacing:0.3px">Information</div>
<div class="a" style="left:19px;top:819px;width:1258px;height:106px;background:#fff;border-left:1px solid #808080;border-top:1px solid #808080;border-right:1px solid #6a6a60;border-bottom:1px solid #6a6a60;box-shadow:inset 1px 1px 0 #606060, inset -1px -1px 0 #ece9d8"></div>
<div class="a" style="left:22px;top:823px;white-space:nowrap;letter-spacing:0px">Geometry file "C:\Zeland\ie3d\practice\Helix2x17_22.geo" loaded</div>
<div class="a" style="left:22px;top:836px;white-space:nowrap;letter-spacing:-0.24px">S-parameters related views are closed.</div>
<div class="a" style="left:22px;top:849px;white-space:nowrap;letter-spacing:-0.24px">S-parameters related views are automatically opened.</div>
<div class="a" style="left:22px;top:862px;white-space:nowrap;letter-spacing:-0.28px">Geometry file is closed.</div>
<div class="a" style="left:22px;top:875px;white-space:nowrap;letter-spacing:-0.07px">Geometry file "C:\Zeland\ie3d\practice\Helix2x17_22_optimmm.geo" loaded</div>
<div class="a" style="left:17px;top:923px;width:56px;height:22px;background:#ece9d8;border-left:1px solid #fff;border-right:1px solid #404040;border-bottom:1px solid #404040;box-shadow:inset -1px -1px 0 #aca899"><span class="a" style="left:6px;top:6px">Message</span></div>
<div class="a" style="left:74px;top:924px;width:54px;height:20px;background:#ece9d8;border-top:1px solid #fff;border-left:1px solid #fff;border-right:1px solid #404040;border-bottom:1px solid #404040;box-shadow:inset -1px -1px 0 #aca899"><span class="a" style="left:4px;top:2px;letter-spacing:-0.15px">Geometry</span></div>
<div class="a" style="left:130px;top:924px;width:78px;height:20px;background:#ece9d8;border-top:1px solid #fff;border-left:1px solid #fff;border-right:1px solid #404040;border-bottom:1px solid #404040;box-shadow:inset -1px -1px 0 #aca899"><span class="a" style="left:4px;top:2px;letter-spacing:-0.15px">Metallic Types</span></div>
<div class="a" style="left:210px;top:924px;width:61px;height:20px;background:#ece9d8;border-top:1px solid #fff;border-left:1px solid #fff;border-right:1px solid #404040;border-bottom:1px solid #404040;box-shadow:inset -1px -1px 0 #aca899"><span class="a" style="left:4px;top:2px;letter-spacing:-0.15px">Substrates</span></div>
<div class="a" style="left:272px;top:924px;width:87px;height:20px;background:#ece9d8;border-top:1px solid #fff;border-left:1px solid #fff;border-right:1px solid #404040;border-bottom:1px solid #404040;box-shadow:inset -1px -1px 0 #aca899"><span class="a" style="left:4px;top:2px;letter-spacing:-0.15px">Finite Dielectrics</span></div>
<div class="a" style="left:361px;top:924px;width:54px;height:20px;background:#ece9d8;border-top:1px solid #fff;border-left:1px solid #fff;border-right:1px solid #404040;border-bottom:1px solid #404040;box-shadow:inset -1px -1px 0 #aca899"><span class="a" style="left:4px;top:2px;letter-spacing:-0.15px">Task List</span></div>
<div class="a" style="left:0;top:948px;width:1280px;height:1px;background:#aca899"></div>
<div class="a" style="left:0;top:949px;width:1280px;height:1px;background:#fff"></div>
<div class="a" style="left:2px;top:953px;white-space:nowrap;letter-spacing:-0.25px">For Help, press F1</div>
<div class="a" style="left:697px;top:951px;width:36px;height:18px;border-left:1px solid #aca899;border-top:1px solid #aca899;border-right:1px solid #fff;border-bottom:1px solid #fff;background:none;white-space:nowrap;overflow:hidden"><span class="a" style="left:1px;top:1px"><span style="letter-spacing:-0.3px">mm</span></span></div>
<div class="a" style="left:735px;top:951px;width:62px;height:18px;border-left:1px solid #aca899;border-top:1px solid #aca899;border-right:1px solid #fff;border-bottom:1px solid #fff;background:none;white-space:nowrap;overflow:hidden"><span class="a" style="left:1px;top:1px"><span style="letter-spacing:-0.3px">0.360682%</span></span></div>
<div class="a" style="left:798px;top:951px;width:77px;height:18px;border-left:1px solid #aca899;border-top:1px solid #aca899;border-right:1px solid #fff;border-bottom:1px solid #fff;background:none;white-space:nowrap;overflow:hidden"><span class="a" style="left:1px;top:1px"><span style="letter-spacing:-0.3px">R2_COPYPEN</span></span></div>
<div class="a" style="left:876px;top:951px;width:127px;height:18px;border-left:1px solid #aca899;border-top:1px solid #aca899;border-right:1px solid #fff;border-bottom:1px solid #fff;background:none;white-space:nowrap;overflow:hidden"><span class="a" style="left:1px;top:1px"><span style="letter-spacing:-0.3px">No Plane Wave Defined</span></span></div>
<div class="a" style="left:1005px;top:951px;width:255px;height:18px;border-left:1px solid #aca899;border-top:1px solid #aca899;border-right:1px solid #fff;border-bottom:1px solid #fff;background:none;white-space:nowrap;overflow:hidden"><span class="a" style="left:1px;top:1px"><span style="letter-spacing:-0.3px"></span></span></div>
<svg class="a" style="left:1264px;top:953px" width="16" height="16"><path d="M15,3L3,15M15,7L7,15M15,11L11,15" stroke="#aca899" stroke-width="1"/><path d="M15,4L4,15M15,8L8,15M15,12L12,15" stroke="#fff" stroke-width="1"/></svg>
<div class="a" style="left:0;top:968px;width:1280px;height:1px;background:#3a6ea5"></div>
<div class="a" style="left:0;top:968px;width:90px;height:1px;background:#3c9a3c"></div>
<svg class="a" style="left:3px;top:1px" width="18" height="17" viewBox="0 0 18 17"><text x="9" y="5.5" font-size="6" font-weight="bold" font-family="Liberation Sans" fill="#c00000" text-anchor="middle">ZLR</text><ellipse cx="9" cy="11.5" rx="7.5" ry="4.5" fill="#00a040" stroke="#004020" stroke-width="0.8"/><ellipse cx="9" cy="11" rx="4" ry="2.2" fill="#c0ffd0"/><path d="M5,11L9,9V13Z" fill="#004020"/></svg>
<svg class="a" style="left:1220px;top:0" width="60" height="20"><rect x="11" y="11" width="6.5" height="2.2" fill="#4a4a48"/><path d="M28.6,12.4V8.6H35.4V12.4Z" fill="none" stroke="#4a4a48" stroke-width="1.2"/><rect x="28" y="7.6" width="8" height="1.6" fill="#4a4a48"/><path d="M31.6,7V5.1H37.4V9.6H36" fill="none" stroke="#4a4a48" stroke-width="1.2"/><rect x="31" y="4.4" width="7" height="1.4" fill="#4a4a48"/><path d="M47.5,5.5L54.5,12.5M54.5,5.5L47.5,12.5" stroke="#4a4a48" stroke-width="2"/></svg>
</body></html>
